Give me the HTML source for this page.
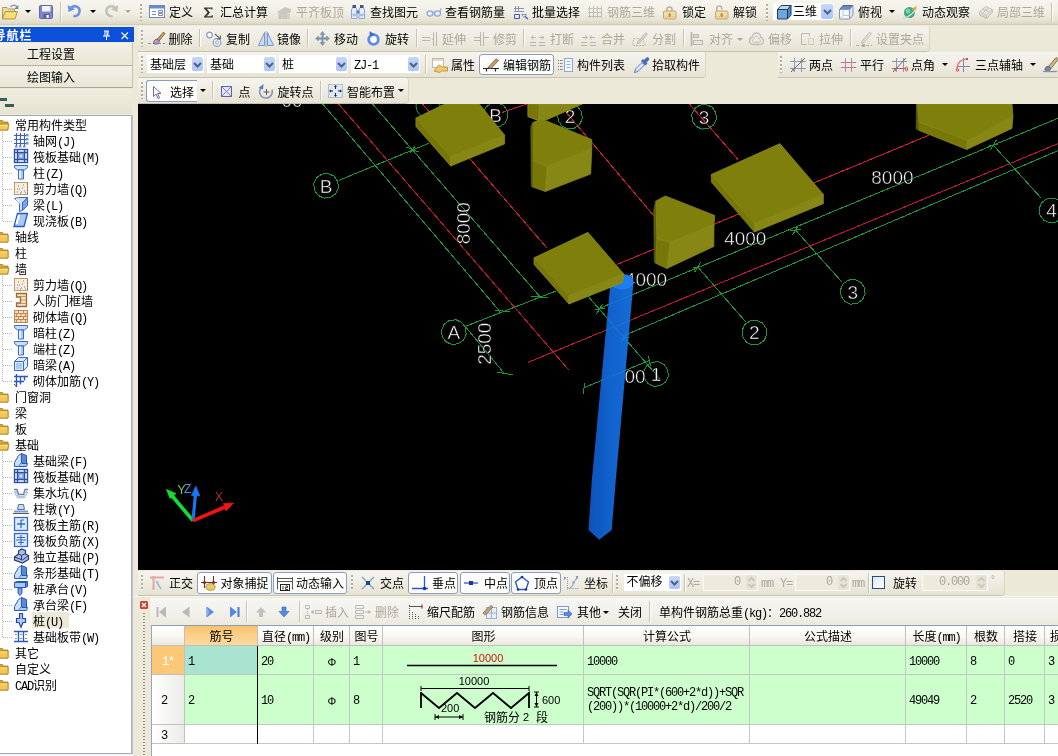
<!DOCTYPE html><html lang="zh"><head><meta charset="utf-8"><title>GGJ</title><style>

html,body{margin:0;padding:0}
body{will-change:transform;width:1058px;height:756px;overflow:hidden;position:relative;background:#ece9d8;font-family:"Liberation Sans","Noto Sans CJK SC",sans-serif;font-size:12px;color:#000;line-height:12px}
.a{position:absolute}
.t{position:absolute;white-space:nowrap;height:14px;line-height:14px;font-size:12px}
.d{color:#aca899}
.ic{position:absolute;width:16px;height:16px;overflow:visible}
.tb{position:absolute;background:linear-gradient(#f5f4ed 0%,#efede2 45%,#e6e3d4 100%);border-bottom:1px solid #c6c3b0;box-shadow:1px 0 0 #d8d5c4}
.grip{position:absolute;width:2px;background-image:repeating-linear-gradient(#b0ad9a 0,#b0ad9a 2px,#fbfaf6 2px,#fbfaf6 3px,transparent 3px,transparent 4px)}
.sep{position:absolute;width:1px;background:#c5c2b2;box-shadow:1px 0 0 #fff}
.btn{position:absolute;border:1px solid #8b9cc0;border-radius:3px;background:#fdfdfb;box-sizing:border-box}
.arr{position:absolute;width:0;height:0;border-left:3px solid transparent;border-right:3px solid transparent;border-top:3px solid #000}
.arr.d{border-top-color:#aca899}
.combo{position:absolute;background:#fff;box-sizing:border-box}
.cbtn{position:absolute;width:13px;background:linear-gradient(#c6d7fb,#adc4f5);border-radius:2px;box-sizing:border-box}
.mono{font-family:"Liberation Mono",monospace;font-size:12px;letter-spacing:-1.2px}

</style></head><body>
<div class="tb" style="left:0px;top:0px;width:1058px;height:24px;background:linear-gradient(#f6f5ee 0%,#f1efe5 50%,#e6e3d4 85%,#dad7c5 100%);border-bottom:1px solid #cfccba"></div>
<div class="sep" style="left:1051px;top:3px;height:19px"></div>
<svg class="ic" style="left:2px;top:4px;" viewBox="0 0 16 16"><path d="M0.500 3.500h4.500l1.500 1.500h6v9.500h-12z" fill="#ecdca8" stroke="#a89060" stroke-width=".9"/><path d="M3 7.500h12.500l-2.500 7.500h-12.500z" fill="#f6d560" stroke="#b09040" stroke-width=".9"/><path d="M4.500 9h9.500l-1.500 4.500h-9.500z" fill="#f9e080"/><path d="M8.500 3c1.500-2.300 5-2.300 6.500 0" fill="none" stroke="#8aa0c0" stroke-width="1.400"/><path d="M16.300 1v4h-4z" fill="#6c84a8"/></svg>
<div class="arr " style="left:24.5px;top:10px"></div>
<svg class="ic" style="left:38px;top:4px;" viewBox="0 0 16 16"><rect x="1.500" y="1.500" width="13" height="13" rx="1" fill="#7c86c4" stroke="#6068a8"/><rect x="4" y="2" width="8.500" height="5.500" fill="#f4f6ff"/><rect x="5.500" y="10" width="6" height="4.500" fill="#5860a0"/><rect x="8.500" y="11" width="2.200" height="3" fill="#fff"/></svg>
<div class="sep" style="left:60px;top:2px;height:20px"></div>
<svg class="ic" style="left:67px;top:4px;" viewBox="0 0 16 16"><g transform="translate(0,-2)"><path d="M3.500 6.500c3-4 9.500-2.500 9 3c-0.300 3-2.500 4.500-5 4.800" fill="none" stroke="#6a92e0" stroke-width="2.600" stroke-linecap="round"/><path d="M0.800 3l0.700 7l6.500-2.800z" fill="#6a92e0"/></g></svg>
<div class="arr " style="left:89.5px;top:10px"></div>
<svg class="ic" style="left:103px;top:4px;opacity:.45;filter:grayscale(1);" viewBox="0 0 16 16"><g transform="translate(0,-2)"><path d="M12.500 6.500c-3-4-9.500-2.500-9 3c0.300 3 2.500 4.500 5 4.800" fill="none" stroke="#8c8c84" stroke-width="2.600" stroke-linecap="round"/><path d="M15.200 3l-0.700 7l-6.500-2.800z" fill="#8c8c84"/></g></svg>
<div class="arr d" style="left:125px;top:10px"></div>
<div class="grip" style="left:140px;top:4px;height:17px"></div>
<svg class="ic" style="left:149px;top:4px;" viewBox="0 0 16 16"><g transform="translate(0,-1)"><rect x="0.500" y="2.500" width="15" height="12" fill="#fff" stroke="#7088c0"/><rect x="1" y="3" width="14" height="2.500" fill="#6888d0"/><path d="M3 8.500h4M3 11.500h4M9.500 7.500h4v2h-4zM9.500 10.500h4v2h-4z" fill="none" stroke="#7890c0"/></g></svg>
<div class="t " style="left:169px;top:6px;">定义</div>
<svg class="ic" style="left:199.5px;top:4px;" viewBox="0 0 16 16"><path d="M4 3.500h8.500v2h-1l-.5-.8h-4.200l3.200 3.800l-3.200 3.800h4.400l.6-1h1v2.200h-8.800v-1l3.600-4l-3.600-4z" fill="#383838"/></svg>
<div class="t " style="left:220px;top:6px;">汇总计算</div>
<svg class="ic" style="left:276px;top:4px;opacity:.45;filter:grayscale(1);" viewBox="0 0 16 16"><path d="M1 8l8-5l6 2v3l-8 4.500z" fill="#9a9a92"/><path d="M2 10h12v5h-12z" fill="#b8b8b0"/><path d="M4 10v5M7 10v5M10 10v5" stroke="#888" /></svg>
<div class="t d" style="left:296px;top:6px;">平齐板顶</div>
<svg class="ic" style="left:350px;top:4px;" viewBox="0 0 16 16"><path d="M1.500 6l1-2.500h3.500l1 2.500v8.500h-5.500zM9 6l1-2.500h3.500l1 2.500v8.500h-5.500z" fill="#e4eefc" stroke="#88a4d8"/><path d="M2.500 1h3.500v3h-3.500zM10 1h3.500v3h-3.500z" fill="#44547c"/><rect x="6.500" y="6.500" width="3" height="3" fill="#6480b8"/><path d="M2.500 11h3.500M10 11h3.500" stroke="#a4bce8" stroke-width="2.500"/></svg>
<div class="t " style="left:370px;top:6px;">查找图元</div>
<svg class="ic" style="left:425.5px;top:4px;" viewBox="0 0 16 16"><ellipse cx="4" cy="9.500" rx="3" ry="2.600" fill="#e8f0fc" stroke="#8fa8d8" stroke-width="1.300"/><ellipse cx="11.500" cy="9.500" rx="3" ry="2.600" fill="#e8f0fc" stroke="#8fa8d8" stroke-width="1.300"/><path d="M7 9c.5-1 1-1 1.500 0M14 8l1-3.500" fill="none" stroke="#8fa8d8" stroke-width="1.200"/></svg>
<div class="t " style="left:445px;top:6px;">查看钢筋量</div>
<svg class="ic" style="left:513px;top:4px;" viewBox="0 0 16 16"><path d="M2.500 2v6M5.500 2v6M1 4.500h10M1 7.500h10" stroke="#8894b8" fill="none"/><path d="M1.500 10.500h5v4h-5z" fill="none" stroke="#4058c8"/><path d="M8.500 10.500h5l-2.500 3z" fill="none" stroke="#8894b8"/><path d="M12 12.500l3 2.500" stroke="#4058c8" stroke-width="1.400"/></svg>
<div class="t " style="left:532px;top:6px;">批量选择</div>
<svg class="ic" style="left:587px;top:4px;opacity:.45;filter:grayscale(1);" viewBox="0 0 16 16"><path d="M2.500 2v12M6.500 2v12M10.500 2v12M14.500 2v12M1 4.500h14M1 8.500h14M1 12.500h14" stroke="#8a8a82" fill="none"/></svg>
<div class="t d" style="left:607px;top:6px;">钢筋三维</div>
<svg class="ic" style="left:662px;top:4px;" viewBox="0 0 16 16"><path d="M5 7.500v-2c0-3.500 5-3.500 5 0v2" fill="none" stroke="#b4ac98" stroke-width="1.400"/><rect x="1.500" y="7" width="12.500" height="8" rx="1.200" fill="#f0dca8" stroke="#c4a670"/><path d="M2.500 12h10.500v2h-10.500z" fill="#e6cc90"/><path d="M7.700 9v4M6.200 11h3" stroke="#a88838" stroke-width="1.100"/></svg>
<div class="t " style="left:682px;top:6px;">锁定</div>
<svg class="ic" style="left:714px;top:4px;" viewBox="0 0 16 16"><path d="M2.800 7.500v-3c0-3.500 5-3.500 5 0v1" fill="none" stroke="#b4ac98" stroke-width="1.400"/><rect x="1.500" y="7" width="12.500" height="8" rx="1.200" fill="#f0dca8" stroke="#c4a670"/><path d="M2.500 12h10.500v2h-10.500z" fill="#e6cc90"/><path d="M7.700 9v4M6.200 11h3" stroke="#a88838" stroke-width="1.100"/></svg>
<div class="t " style="left:733px;top:6px;">解锁</div>
<div class="grip" style="left:766px;top:4px;height:17px"></div>
<div class="a" style="left:773px;top:3px;width:60px;height:17px;background:#fff"></div>
<svg class="ic" style="left:775.5px;top:3.5px;" viewBox="0 0 16 16"><path d="M1.500 5.500l3.500-4h10l-3.500 4z" fill="#bcd8f0" stroke="#283858"/><path d="M1.500 5.500h10v9.500h-10z" fill="#6aa8dc" stroke="#283858"/><path d="M11.500 5.500l3.500-4v9.500l-3.500 4z" fill="#4888c8" stroke="#283858"/></svg>
<div class="t " style="left:793px;top:4.5px;">三维</div>
<div class="cbtn" style="left:821px;top:4px;width:12px;height:15px;width:12px"></div>
<svg class="a" style="left:822.5px;top:8px" width="9" height="8" viewBox="0 0 9 8"><path d="M1 2 L4.5 5.5 L8 2" fill="none" stroke="#4d6185" stroke-width="2"/></svg>
<svg class="ic" style="left:838px;top:4px;" viewBox="0 0 16 16"><path d="M1.500 5.500l3.500-4h10l-3.500 4z" fill="#6888c0" stroke="#506088"/><path d="M1.500 5.500h10v9.500h-10z" fill="#f4f8ff" stroke="#8098c0"/><path d="M11.500 5.500l3.500-4v9.500l-3.500 4z" fill="#dce8f8" stroke="#8098c0"/><path d="M5 5.500v6h6.500M5 11.500l-3.500 3.500" stroke="#b8c8e0" fill="none"/></svg>
<div class="t " style="left:858px;top:6px;">俯视</div>
<div class="arr " style="left:889px;top:10px"></div>
<svg class="ic" style="left:902px;top:4px;" viewBox="0 0 16 16"><circle cx="7.500" cy="8.500" r="5.500" fill="#38a878"/><circle cx="6" cy="7" r="2.500" fill="#78d0a8"/><path d="M1 13.500c2.500 2 12-5 13.500-10" fill="none" stroke="#c8d8f0" stroke-width="1.500"/><path d="M11 4.500l4-3.500l-1 4.500z" fill="#e8c040"/><path d="M10.500 6l2.500-2" stroke="#d8a830" stroke-width="2.400"/></svg>
<div class="t " style="left:922px;top:6px;">动态观察</div>
<svg class="ic" style="left:978px;top:4px;opacity:.45;filter:grayscale(1);" viewBox="0 0 16 16"><path d="M1.500 8l6-5.500l7 3l-6 6z" fill="#d8d8d0" stroke="#8a8a82"/><path d="M1.500 8v3l7 3.500v-3M8.500 14.500l6-6v-3" fill="#c0c0b8" stroke="#8a8a82"/><path d="M5 5l6.500 3M4.500 9.500l5-5" stroke="#8a8a82" fill="none"/></svg>
<div class="t d" style="left:997px;top:6px;">局部三维</div>
<div class="a" style="left:0px;top:27px;width:134px;height:15px;background:#0a50d8"></div>
<div class="t " style="left:-6.5px;top:28.5px;color:#fff;font-size:12px;font-weight:bold;letter-spacing:1px">导航栏</div>
<svg class="a" style="left:101px;top:29px" width="30" height="12" viewBox="0 0 30 12"><path d="M3 2h5M4 2v5M7 2v5M6 2v5M2 7h7M5.5 7v4" stroke="#fff" stroke-width="1" fill="none"/><path d="M20.500 3.500l6.500 6.500M27 3.500l-6.500 6.500" stroke="#fff" stroke-width="1.1"/></svg>
<div class="a" style="left:0px;top:43px;width:132px;height:22px;background:linear-gradient(#f3f1e7,#e9e6d6);border-bottom:1px solid #b5b19c;border-right:1px solid #c8c4b0"></div>
<div class="t " style="left:27px;top:48px;">工程设置</div>
<div class="a" style="left:0px;top:66px;width:132px;height:21px;background:linear-gradient(#f3f1e7,#e9e6d6);border-bottom:1px solid #a9a692;border-right:1px solid #c8c4b0"></div>
<div class="t " style="left:27px;top:71px;">绘图输入</div>
<div class="a" style="left:0px;top:89px;width:132px;height:25px;background:linear-gradient(#efede0,#e6e3d2)"></div>
<div class="a" style="left:0px;top:98px;width:7px;height:3px;background:#35605a"></div>
<div class="a" style="left:5px;top:104px;width:9px;height:3px;background:#35605a"></div>
<div class="a" style="left:0px;top:115px;width:131px;height:637px;background:#fff;border-top:1px solid #a5a8b8;border-bottom:1px solid #a6a8c0"></div>
<div class="a" style="left:0px;top:754px;width:133px;height:2px;background:#f4f6fa"></div>
<div class="a" style="left:131px;top:115px;width:2px;height:639px;background:linear-gradient(90deg,#a6a8c0,#c6c8d8)"></div>
<div class="a" style="left:2px;top:132px;width:1px;height:89px;background-image:repeating-linear-gradient(#b8b8b8 0,#b8b8b8 1px,transparent 1px,transparent 2px)"></div>
<div class="a" style="left:2px;top:276px;width:1px;height:105px;background-image:repeating-linear-gradient(#b8b8b8 0,#b8b8b8 1px,transparent 1px,transparent 2px)"></div>
<div class="a" style="left:2px;top:452px;width:1px;height:185px;background-image:repeating-linear-gradient(#b8b8b8 0,#b8b8b8 1px,transparent 1px,transparent 2px)"></div>
<svg class="ic" style="left:-8px;top:116px;" viewBox="0 0 16 16"><path d="M6.500 4.500h4l1 1.500h4.500v8h-9.500z" fill="#dca830" stroke="#a07820" stroke-width=".8"/><path d="M6 14l1.500-6h9.500l-1.500 6z" fill="#f6cc58" stroke="#a88028" stroke-width=".8"/><path d="M8 9.500h7.500" stroke="#fbe49a"/></svg>
<div class="t " style="left:15px;top:119px;">常用构件类型</div>
<div class="a" style="left:3px;top:141px;width:10px;height:1px;background-image:repeating-linear-gradient(90deg,#b8b8b8 0,#b8b8b8 1px,transparent 1px,transparent 2px)"></div>
<svg class="ic" style="left:13px;top:132px;" viewBox="0 0 16 16"><path d="M3.500 1v13M7.500 1v13M11.500 1v13M1 3.500h13M1 7.500h13M1 11.500h13" stroke="#4060b0" stroke-width="1.200"/><path d="M13 2h2.500v2.500h-2.500zM13 6h2.500v2.500h-2.500zM13 10h2.500v2.500h-2.500zM2 13.500h2.500v2h-2.500zM6 13.500h2.500v2h-2.500zM10 13.500h2.500v2h-2.500z" fill="#7090d8"/></svg>
<div class="t " style="left:33px;top:135px;">轴网<span class="mono">(J)</span></div>
<div class="a" style="left:3px;top:157px;width:10px;height:1px;background-image:repeating-linear-gradient(90deg,#b8b8b8 0,#b8b8b8 1px,transparent 1px,transparent 2px)"></div>
<svg class="ic" style="left:13px;top:148px;" viewBox="0 0 16 16"><rect x="1.500" y="1.500" width="13" height="13" fill="#fff" stroke="#2850a8" stroke-width="1.400"/><path d="M1.500 4.500h13M1.500 11.500h13M4.500 1.500v13M11.500 1.500v13" stroke="#2850a8" stroke-width="1.400"/><rect x="5.800" y="5.800" width="4.400" height="4.400" fill="#c8dcf8" stroke="#5078c8"/></svg>
<div class="t " style="left:33px;top:151px;">筏板基础<span class="mono">(M)</span></div>
<div class="a" style="left:3px;top:173px;width:10px;height:1px;background-image:repeating-linear-gradient(90deg,#b8b8b8 0,#b8b8b8 1px,transparent 1px,transparent 2px)"></div>
<svg class="ic" style="left:13px;top:164px;" viewBox="0 0 16 16"><path d="M1.500 1.500h13v2l-3 2.500h-7l-3-2.500z" fill="#c8e0fc" stroke="#3868c8"/><path d="M5.500 6h5v9h-5z" fill="#a8c8f8" stroke="#3868c8"/><path d="M7 6.500v8" stroke="#fff" stroke-width="1.500"/></svg>
<div class="t " style="left:33px;top:167px;">柱<span class="mono">(Z)</span></div>
<div class="a" style="left:3px;top:189px;width:10px;height:1px;background-image:repeating-linear-gradient(90deg,#b8b8b8 0,#b8b8b8 1px,transparent 1px,transparent 2px)"></div>
<svg class="ic" style="left:13px;top:180px;" viewBox="0 0 16 16"><rect x="1.500" y="2.500" width="13" height="12" fill="#f8ecd8" stroke="#c89868"/><path d="M4 12h1M6 9h1M8 12h1M5 6h1M9 8h1M11 11h1M7 13h1M10 5h1M12 13h1M4 9h1" stroke="#6080c0"/><path d="M14.500 3v11" stroke="#a87848" stroke-dasharray="2 1"/></svg>
<div class="t " style="left:33px;top:183px;">剪力墙<span class="mono">(Q)</span></div>
<div class="a" style="left:3px;top:205px;width:10px;height:1px;background-image:repeating-linear-gradient(90deg,#b8b8b8 0,#b8b8b8 1px,transparent 1px,transparent 2px)"></div>
<svg class="ic" style="left:13px;top:196px;" viewBox="0 0 16 16"><path d="M1.500 2.500l4-1h9l-3 4l-2 1v8l-3 1v-8z" fill="#c8e0fc" stroke="#3868c8"/><path d="M9.500 14.500v-8l5-5v8z" fill="#7aa0e8" stroke="#3868c8"/><path d="M3 3l4 4" stroke="#fff" stroke-width="1.500"/></svg>
<div class="t " style="left:33px;top:199px;">梁<span class="mono">(L)</span></div>
<div class="a" style="left:3px;top:221px;width:10px;height:1px;background-image:repeating-linear-gradient(90deg,#b8b8b8 0,#b8b8b8 1px,transparent 1px,transparent 2px)"></div>
<svg class="ic" style="left:13px;top:212px;" viewBox="0 0 16 16"><path d="M4.500 1.500h10l-3.500 13h-10z" fill="#a8c8f8" stroke="#2858c0" stroke-width="1.300"/><path d="M6 3l-2.500 9" stroke="#fff" stroke-width="2"/></svg>
<div class="t " style="left:33px;top:215px;">现浇板<span class="mono">(B)</span></div>
<svg class="ic" style="left:-8px;top:228px;" viewBox="0 0 16 16"><path d="M6.500 4.500h4l1 1.500h4.500v8h-9.500z" fill="#dca830" stroke="#a07820" stroke-width=".8"/><path d="M6.500 7h9.500v7h-9.500z" fill="#f4c850" stroke="#a88028" stroke-width=".8"/><path d="M7.500 8h7.500" stroke="#fbe49a"/></svg>
<div class="t " style="left:15px;top:231px;">轴线</div>
<svg class="ic" style="left:-8px;top:244px;" viewBox="0 0 16 16"><path d="M6.500 4.500h4l1 1.500h4.500v8h-9.500z" fill="#dca830" stroke="#a07820" stroke-width=".8"/><path d="M6.500 7h9.500v7h-9.500z" fill="#f4c850" stroke="#a88028" stroke-width=".8"/><path d="M7.500 8h7.500" stroke="#fbe49a"/></svg>
<div class="t " style="left:15px;top:247px;">柱</div>
<svg class="ic" style="left:-8px;top:260px;" viewBox="0 0 16 16"><path d="M6.500 4.500h4l1 1.500h4.500v8h-9.500z" fill="#dca830" stroke="#a07820" stroke-width=".8"/><path d="M6 14l1.500-6h9.500l-1.500 6z" fill="#f6cc58" stroke="#a88028" stroke-width=".8"/><path d="M8 9.500h7.500" stroke="#fbe49a"/></svg>
<div class="t " style="left:15px;top:263px;">墙</div>
<div class="a" style="left:3px;top:285px;width:10px;height:1px;background-image:repeating-linear-gradient(90deg,#b8b8b8 0,#b8b8b8 1px,transparent 1px,transparent 2px)"></div>
<svg class="ic" style="left:13px;top:276px;" viewBox="0 0 16 16"><rect x="1.500" y="2.500" width="13" height="12" fill="#f8ecd8" stroke="#c89868"/><path d="M4 12h1M6 9h1M8 12h1M5 6h1M9 8h1M11 11h1M7 13h1M10 5h1M12 13h1M4 9h1" stroke="#6080c0"/><path d="M14.500 3v11" stroke="#a87848" stroke-dasharray="2 1"/></svg>
<div class="t " style="left:33px;top:279px;">剪力墙<span class="mono">(Q)</span></div>
<div class="a" style="left:3px;top:301px;width:10px;height:1px;background-image:repeating-linear-gradient(90deg,#b8b8b8 0,#b8b8b8 1px,transparent 1px,transparent 2px)"></div>
<svg class="ic" style="left:13px;top:292px;" viewBox="0 0 16 16"><path d="M3.500 1.500h10v13h-10v-3.500h4v-6h-4z" fill="#f8e0c0" stroke="#a06830" stroke-width="1.300"/><path d="M8 4.500h5M8 8h5M8 11.500h5" stroke="#c89868"/></svg>
<div class="t " style="left:33px;top:295px;">人防门框墙</div>
<div class="a" style="left:3px;top:317px;width:10px;height:1px;background-image:repeating-linear-gradient(90deg,#b8b8b8 0,#b8b8b8 1px,transparent 1px,transparent 2px)"></div>
<svg class="ic" style="left:13px;top:308px;" viewBox="0 0 16 16"><rect x="1.500" y="2.500" width="13" height="12" fill="#f8e0c0" stroke="#c08850"/><path d="M1.500 5.500h13M1.500 8.500h13M1.500 11.500h13M5.500 2.500v3M10.500 2.500v3M3.500 5.500v3M8 5.500v3M12.500 5.500v3M5.500 8.500v3M10.500 8.500v3M3.500 11.500v3M8 11.500v3M12.500 11.500v3" stroke="#c08850"/></svg>
<div class="t " style="left:33px;top:311px;">砌体墙<span class="mono">(Q)</span></div>
<div class="a" style="left:3px;top:333px;width:10px;height:1px;background-image:repeating-linear-gradient(90deg,#b8b8b8 0,#b8b8b8 1px,transparent 1px,transparent 2px)"></div>
<svg class="ic" style="left:13px;top:324px;" viewBox="0 0 16 16"><path d="M1.500 1.500h13v2l-3 2.500h-7l-3-2.500z" fill="#c8e0fc" stroke="#3868c8"/><path d="M5.500 6h5v9h-5z" fill="#a8c8f8" stroke="#3868c8"/><path d="M7 6.500v8" stroke="#fff" stroke-width="1.500"/></svg>
<div class="t " style="left:33px;top:327px;">暗柱<span class="mono">(Z)</span></div>
<div class="a" style="left:3px;top:349px;width:10px;height:1px;background-image:repeating-linear-gradient(90deg,#b8b8b8 0,#b8b8b8 1px,transparent 1px,transparent 2px)"></div>
<svg class="ic" style="left:13px;top:340px;" viewBox="0 0 16 16"><path d="M1.500 1.500h13v2l-3 2.500h-7l-3-2.500z" fill="#c8e0fc" stroke="#3868c8"/><path d="M5.500 6h5v9h-5z" fill="#a8c8f8" stroke="#3868c8"/><path d="M7 6.500v8" stroke="#fff" stroke-width="1.500"/></svg>
<div class="t " style="left:33px;top:343px;">端柱<span class="mono">(Z)</span></div>
<div class="a" style="left:3px;top:365px;width:10px;height:1px;background-image:repeating-linear-gradient(90deg,#b8b8b8 0,#b8b8b8 1px,transparent 1px,transparent 2px)"></div>
<svg class="ic" style="left:13px;top:356px;" viewBox="0 0 16 16"><path d="M1.500 5.500l4-4h9v9l-4 4h-9z" fill="#dcecfc" stroke="#3868c8"/><path d="M1.500 5.500h9v9M10.500 5.500l4-4" fill="none" stroke="#3868c8"/><path d="M3 7h6v6h-6z" fill="#a8c8f8"/></svg>
<div class="t " style="left:33px;top:359px;">暗梁<span class="mono">(A)</span></div>
<div class="a" style="left:3px;top:381px;width:10px;height:1px;background-image:repeating-linear-gradient(90deg,#b8b8b8 0,#b8b8b8 1px,transparent 1px,transparent 2px)"></div>
<svg class="ic" style="left:13px;top:372px;" viewBox="0 0 16 16"><path d="M1 4.500h14M3.500 2v13M1 9.500h10M7.500 4.500v8M11.500 4.500v4" stroke="#2858b8" stroke-width="1.400" fill="none"/><path d="M1 12l3 3" stroke="#2858b8"/></svg>
<div class="t " style="left:33px;top:375px;">砌体加筋<span class="mono">(Y)</span></div>
<svg class="ic" style="left:-8px;top:388px;" viewBox="0 0 16 16"><path d="M6.500 4.500h4l1 1.500h4.500v8h-9.500z" fill="#dca830" stroke="#a07820" stroke-width=".8"/><path d="M6.500 7h9.500v7h-9.500z" fill="#f4c850" stroke="#a88028" stroke-width=".8"/><path d="M7.500 8h7.500" stroke="#fbe49a"/></svg>
<div class="t " style="left:15px;top:391px;">门窗洞</div>
<svg class="ic" style="left:-8px;top:404px;" viewBox="0 0 16 16"><path d="M6.500 4.500h4l1 1.500h4.500v8h-9.500z" fill="#dca830" stroke="#a07820" stroke-width=".8"/><path d="M6.500 7h9.500v7h-9.500z" fill="#f4c850" stroke="#a88028" stroke-width=".8"/><path d="M7.500 8h7.500" stroke="#fbe49a"/></svg>
<div class="t " style="left:15px;top:407px;">梁</div>
<svg class="ic" style="left:-8px;top:420px;" viewBox="0 0 16 16"><path d="M6.500 4.500h4l1 1.500h4.500v8h-9.500z" fill="#dca830" stroke="#a07820" stroke-width=".8"/><path d="M6.500 7h9.500v7h-9.500z" fill="#f4c850" stroke="#a88028" stroke-width=".8"/><path d="M7.500 8h7.500" stroke="#fbe49a"/></svg>
<div class="t " style="left:15px;top:423px;">板</div>
<svg class="ic" style="left:-8px;top:436px;" viewBox="0 0 16 16"><path d="M6.500 4.500h4l1 1.500h4.500v8h-9.500z" fill="#dca830" stroke="#a07820" stroke-width=".8"/><path d="M6 14l1.500-6h9.500l-1.500 6z" fill="#f6cc58" stroke="#a88028" stroke-width=".8"/><path d="M8 9.500h7.500" stroke="#fbe49a"/></svg>
<div class="t " style="left:15px;top:439px;">基础</div>
<div class="a" style="left:3px;top:461px;width:10px;height:1px;background-image:repeating-linear-gradient(90deg,#b8b8b8 0,#b8b8b8 1px,transparent 1px,transparent 2px)"></div>
<svg class="ic" style="left:13px;top:452px;" viewBox="0 0 16 16"><path d="M1.500 14.500v-4l4-7l3-2v9l-3 4z" fill="#c8e0fc" stroke="#2858b8"/><path d="M8.500 10.500v-9l5 2v9z" fill="#5888e0" stroke="#2858b8"/><path d="M5.500 14.500h8l1-3h-6" fill="#a8c8f8" stroke="#2858b8"/></svg>
<div class="t " style="left:33px;top:455px;">基础梁<span class="mono">(F)</span></div>
<div class="a" style="left:3px;top:477px;width:10px;height:1px;background-image:repeating-linear-gradient(90deg,#b8b8b8 0,#b8b8b8 1px,transparent 1px,transparent 2px)"></div>
<svg class="ic" style="left:13px;top:468px;" viewBox="0 0 16 16"><rect x="1.500" y="1.500" width="13" height="13" fill="#fff" stroke="#2850a8" stroke-width="1.400"/><path d="M1.500 4.500h13M1.500 11.500h13M4.500 1.500v13M11.500 1.500v13" stroke="#2850a8" stroke-width="1.400"/><rect x="5.800" y="5.800" width="4.400" height="4.400" fill="#c8dcf8" stroke="#5078c8"/></svg>
<div class="t " style="left:33px;top:471px;">筏板基础<span class="mono">(M)</span></div>
<div class="a" style="left:3px;top:493px;width:10px;height:1px;background-image:repeating-linear-gradient(90deg,#b8b8b8 0,#b8b8b8 1px,transparent 1px,transparent 2px)"></div>
<svg class="ic" style="left:13px;top:484px;" viewBox="0 0 16 16"><path d="M1 5.500h3l1.500 5h5l1.500-5h3" fill="none" stroke="#6080b8" stroke-width="1.300"/><path d="M1 8l3.500 6h7l3.500-6l-2.500-.5l-2 5h-5l-2-5z" fill="#d0dcf0" stroke="#8098c8" stroke-dasharray="1 1"/></svg>
<div class="t " style="left:33px;top:487px;">集水坑<span class="mono">(K)</span></div>
<div class="a" style="left:3px;top:509px;width:10px;height:1px;background-image:repeating-linear-gradient(90deg,#b8b8b8 0,#b8b8b8 1px,transparent 1px,transparent 2px)"></div>
<svg class="ic" style="left:13px;top:500px;" viewBox="0 0 16 16"><path d="M5.500 4.500h5l1 5h-7z" fill="#c8dcf8" stroke="#5070b0"/><path d="M1 10.500h14v2h-14z" fill="#8098c8"/><path d="M0 13.500h16" stroke="#555"/></svg>
<div class="t " style="left:33px;top:503px;">柱墩<span class="mono">(Y)</span></div>
<div class="a" style="left:3px;top:525px;width:10px;height:1px;background-image:repeating-linear-gradient(90deg,#b8b8b8 0,#b8b8b8 1px,transparent 1px,transparent 2px)"></div>
<svg class="ic" style="left:13px;top:516px;" viewBox="0 0 16 16"><rect x="1.500" y="1.500" width="13" height="13" fill="#dcecfc" stroke="#3868c8" stroke-width="1.300"/><path d="M8 4v8M4 8h8" stroke="#3868c8" stroke-width="1.300"/><path d="M8 4h3" stroke="#3868c8"/></svg>
<div class="t " style="left:33px;top:519px;">筏板主筋<span class="mono">(R)</span></div>
<div class="a" style="left:3px;top:541px;width:10px;height:1px;background-image:repeating-linear-gradient(90deg,#b8b8b8 0,#b8b8b8 1px,transparent 1px,transparent 2px)"></div>
<svg class="ic" style="left:13px;top:532px;" viewBox="0 0 16 16"><rect x="1.500" y="1.500" width="13" height="13" fill="#dcecfc" stroke="#3868c8" stroke-width="1.300"/><path d="M8 3v10M3 8h10M4 5.500h8M5 10.500h6" stroke="#3868c8" stroke-width="1.100"/></svg>
<div class="t " style="left:33px;top:535px;">筏板负筋<span class="mono">(X)</span></div>
<div class="a" style="left:3px;top:557px;width:10px;height:1px;background-image:repeating-linear-gradient(90deg,#b8b8b8 0,#b8b8b8 1px,transparent 1px,transparent 2px)"></div>
<svg class="ic" style="left:13px;top:548px;" viewBox="0 0 16 16"><path d="M1.500 9l4-3v-3l3-2l4 1.500v3.500l3 1.500v4l-6 3.500l-8-3z" fill="#a8c0e8" stroke="#283870" stroke-width="1.200"/><path d="M5.500 6l3 1.500l4-2M8.500 7.500v4M1.500 9l8 3l6-4.500" fill="none" stroke="#283870"/></svg>
<div class="t " style="left:33px;top:551px;">独立基础<span class="mono">(P)</span></div>
<div class="a" style="left:3px;top:573px;width:10px;height:1px;background-image:repeating-linear-gradient(90deg,#b8b8b8 0,#b8b8b8 1px,transparent 1px,transparent 2px)"></div>
<svg class="ic" style="left:13px;top:564px;" viewBox="0 0 16 16"><path d="M1.500 14.500v-4l4-7l3-2v9l-3 4z" fill="#c8e0fc" stroke="#2858b8"/><path d="M8.500 10.500v-9l5 2v9z" fill="#5888e0" stroke="#2858b8"/><path d="M5.500 14.500h8l1-3h-6" fill="#a8c8f8" stroke="#2858b8"/></svg>
<div class="t " style="left:33px;top:567px;">条形基础<span class="mono">(T)</span></div>
<div class="a" style="left:3px;top:589px;width:10px;height:1px;background-image:repeating-linear-gradient(90deg,#b8b8b8 0,#b8b8b8 1px,transparent 1px,transparent 2px)"></div>
<svg class="ic" style="left:13px;top:580px;" viewBox="0 0 16 16"><path d="M1.500 2.500l2-1h11l-2 1z" fill="#dcecfc" stroke="#2858b8"/><path d="M1.500 2.500h11v5h-11z" fill="#a8c8f8" stroke="#2858b8"/><path d="M12.500 2.500l2-1v5l-2 1z" fill="#5888e0" stroke="#2858b8"/><path d="M5 8h4v5l-2 2.500l-2-2.500z" fill="#7aa0e8" stroke="#2858b8"/></svg>
<div class="t " style="left:33px;top:583px;">桩承台<span class="mono">(V)</span></div>
<div class="a" style="left:3px;top:605px;width:10px;height:1px;background-image:repeating-linear-gradient(90deg,#b8b8b8 0,#b8b8b8 1px,transparent 1px,transparent 2px)"></div>
<svg class="ic" style="left:13px;top:596px;" viewBox="0 0 16 16"><path d="M1.500 14.500v-4l4-7l3-2v9l-3 4z" fill="#c8e0fc" stroke="#2858b8"/><path d="M8.500 10.500v-9l5 2v9z" fill="#5888e0" stroke="#2858b8"/><path d="M5.500 14.500h8l1-3h-6" fill="#a8c8f8" stroke="#2858b8"/></svg>
<div class="t " style="left:33px;top:599px;">承台梁<span class="mono">(F)</span></div>
<div class="a" style="left:3px;top:621px;width:10px;height:1px;background-image:repeating-linear-gradient(90deg,#b8b8b8 0,#b8b8b8 1px,transparent 1px,transparent 2px)"></div>
<div class="a" style="left:32px;top:612px;width:37px;height:16px;background:#ece9d8"></div>
<svg class="ic" style="left:13px;top:612px;" viewBox="0 0 16 16"><path d="M6.500 1.500h3v5h3v4h-2.500l-2 5l-2-5h-2.500v-4h3z" fill="#a8c8f8" stroke="#2848a0" stroke-width="1.200"/></svg>
<div class="t " style="left:33px;top:615px;">桩<span class="mono">(U)</span></div>
<div class="a" style="left:3px;top:637px;width:10px;height:1px;background-image:repeating-linear-gradient(90deg,#b8b8b8 0,#b8b8b8 1px,transparent 1px,transparent 2px)"></div>
<svg class="ic" style="left:13px;top:628px;" viewBox="0 0 16 16"><path d="M1 3.500h14M1 13.500h14" stroke="#2858b8" stroke-width="1.600"/><path d="M5.500 3.500v10M10.500 3.500v10" stroke="#2858b8" stroke-width="1.300"/><path d="M2 6.500h2M7 6.500h2M12 6.500h2M2 10.500h2M7 10.500h2M12 10.500h2" stroke="#7090d0"/></svg>
<div class="t " style="left:33px;top:631px;">基础板带<span class="mono">(W)</span></div>
<svg class="ic" style="left:-8px;top:644px;" viewBox="0 0 16 16"><path d="M6.500 4.500h4l1 1.500h4.500v8h-9.500z" fill="#dca830" stroke="#a07820" stroke-width=".8"/><path d="M6.500 7h9.500v7h-9.500z" fill="#f4c850" stroke="#a88028" stroke-width=".8"/><path d="M7.500 8h7.500" stroke="#fbe49a"/></svg>
<div class="t " style="left:15px;top:647px;">其它</div>
<svg class="ic" style="left:-8px;top:660px;" viewBox="0 0 16 16"><path d="M6.500 4.500h4l1 1.500h4.500v8h-9.500z" fill="#dca830" stroke="#a07820" stroke-width=".8"/><path d="M6.500 7h9.500v7h-9.500z" fill="#f4c850" stroke="#a88028" stroke-width=".8"/><path d="M7.500 8h7.500" stroke="#fbe49a"/></svg>
<div class="t " style="left:15px;top:663px;">自定义</div>
<svg class="ic" style="left:-8px;top:676px;" viewBox="0 0 16 16"><path d="M6.500 4.500h4l1 1.500h4.500v8h-9.500z" fill="#dca830" stroke="#a07820" stroke-width=".8"/><path d="M6.500 7h9.500v7h-9.500z" fill="#f4c850" stroke="#a88028" stroke-width=".8"/><path d="M7.500 8h7.500" stroke="#fbe49a"/></svg>
<div class="t " style="left:15px;top:679px;"><span class="mono">CAD</span>识别</div>
<div class="tb" style="left:138px;top:26px;width:791px;height:25px;border-radius:0 3px 3px 0"></div>
<div class="grip" style="left:141px;top:30px;height:17px"></div>
<svg class="ic" style="left:148px;top:31px;" viewBox="0 0 16 16"><path d="M0 12.500h17" stroke="#8a8f98" stroke-width="1" stroke-dasharray="3 2"/><path d="M9 8.500l6.500-7.500l1.500 1.500l-6 7.500z" fill="#c8a060" stroke="#705830" stroke-width=".8"/><path d="M5.500 12.500c0-3 2-5 4.500-4l1.200 1.200c.8 2-2 4.500-5.700 2.800z" fill="#b898c8" stroke="#584868" stroke-width=".8"/></svg>
<div class="t " style="left:168.5px;top:33px;">删除</div>
<svg class="ic" style="left:206px;top:31px;" viewBox="0 0 16 16"><circle cx="3.500" cy="4" r="2.800" fill="#fff" stroke="#8098c0" stroke-width="1.200"/><circle cx="11" cy="11.500" r="3.800" fill="#fff" stroke="#8098c0" stroke-width="1.200"/><circle cx="11" cy="11.500" r="1.600" fill="none" stroke="#8098c0"/><path d="M9 3l5.500 5M14.500 4.500v3.500h-3.500" fill="none" stroke="#606870" stroke-width="1.100"/></svg>
<div class="t " style="left:226px;top:33px;">复制</div>
<svg class="ic" style="left:258px;top:31px;" viewBox="0 0 16 16"><path d="M6.500 1.500v13h-6z" fill="#c8dcf8" stroke="#7898d0"/><path d="M9.500 1.500v13h6z" fill="#c8dcf8" stroke="#7898d0"/><path d="M8 0v16" stroke="#9098a8" stroke-width=".8"/></svg>
<div class="t " style="left:277px;top:33px;">镜像</div>
<svg class="ic" style="left:315px;top:31px;" viewBox="0 0 16 16"><path d="M7.500 0.500l2.500 3h-1.800v3.300h3.300v-1.800l3 2.500l-3 2.500v-1.800h-3.300v3.300h1.800l-2.500 3l-2.500-3h1.800v-3.300h-3.300v1.800l-3-2.500l3-2.500v1.800h3.300v-3.300h-1.800z" fill="#8098b4" stroke="#5c7490" stroke-width=".4"/></svg>
<div class="t " style="left:334px;top:33px;">移动</div>
<svg class="ic" style="left:366px;top:31px;" viewBox="0 0 16 16"><circle cx="7.500" cy="8.500" r="4.800" fill="#fff" stroke="#5c8ce4" stroke-width="2.800"/><path d="M3.500 0l5 3.500l-5.500 2.500z" fill="#3868d0"/><path d="M0.500 2.500l3-2.500v5.500z" fill="#efede2"/></svg>
<div class="t " style="left:385px;top:33px;">旋转</div>
<svg class="ic" style="left:422px;top:31px;opacity:.45;filter:grayscale(1);" viewBox="0 0 16 16"><path d="M11.500 1v14M14.500 1v14" stroke="#777" fill="none"/><path d="M0 6.500h8M0 9.500h8" stroke="#777"/><path d="M8 8h3" stroke="#777" stroke-dasharray="1 1"/></svg>
<div class="t d" style="left:442px;top:33px;">延伸</div>
<svg class="ic" style="left:473.5px;top:31px;opacity:.45;filter:grayscale(1);" viewBox="0 0 16 16"><path d="M6.500 1v14M9.500 1v14" stroke="#777" fill="none"/><path d="M0 6.500h6M10 6.500h5M0 9.500h6" stroke="#777"/></svg>
<div class="t d" style="left:493px;top:33px;">修剪</div>
<svg class="ic" style="left:530px;top:31px;opacity:.45;filter:grayscale(1);" viewBox="0 0 16 16"><path d="M0 11.500h6M9 11.500h6M0 14.500h6M9 14.500h6" stroke="#777"/><path d="M1 6.500h5M9 6.500h5M3.500 4.500l-2.500 2l2.500 2M11.500 4.500l2.500 2l-2.500 2" stroke="#777" fill="none"/></svg>
<div class="t d" style="left:550px;top:33px;">打断</div>
<svg class="ic" style="left:581px;top:31px;opacity:.45;filter:grayscale(1);" viewBox="0 0 16 16"><path d="M0 11.500h6M9 11.500h6M0 14.500h6M9 14.500h6" stroke="#777"/><path d="M1 6.500h5M9 6.500h5M4 4.500l2.500 2l-2.500 2M11 4.500l-2.500 2l2.500 2" stroke="#777" fill="none"/></svg>
<div class="t d" style="left:601px;top:33px;">合并</div>
<svg class="ic" style="left:632px;top:31px;opacity:.45;filter:grayscale(1);" viewBox="0 0 16 16"><path d="M1.500 7.500h9l3 7h-12.500z" fill="none" stroke="#777" stroke-dasharray="2 1"/><path d="M6 10.500l8-9l1.500 1.500l-8 9l-2.500 1z" fill="#bbb" stroke="#666" stroke-width=".8"/></svg>
<div class="t d" style="left:652px;top:33px;">分割</div>
<svg class="ic" style="left:690px;top:31px;opacity:.45;filter:grayscale(1);" viewBox="0 0 16 16"><path d="M1.500 1v14" stroke="#666" stroke-width="1.600"/><rect x="3.500" y="3.500" width="5" height="3" fill="#bbb" stroke="#777"/><rect x="3.500" y="9.500" width="9" height="4" fill="#ddd" stroke="#777"/></svg>
<div class="t d" style="left:709px;top:33px;">对齐</div>
<svg class="ic" style="left:749px;top:31px;opacity:.45;filter:grayscale(1);" viewBox="0 0 16 16"><path d="M7.500 2c3 0 4 2 4 4c2 .5 3 2 3 4c0 2-1.500 3.500-4 3.500h-6c-2.500 0-4-1.500-4-3.500c0-2 1-3.500 3-4c0-2 1-4 4-4z" fill="none" stroke="#888" stroke-width="1.300"/><path d="M7.500 5c1.500 0 1.800 1.200 1.800 2.500c1.500.3 2.200 1 2.200 2.200c0 1-.8 1.600-2 1.600h-4c-1.200 0-2-.6-2-1.600c0-1.200.7-1.900 2.200-2.200c0-1.300.3-2.500 1.800-2.500z" fill="none" stroke="#888"/></svg>
<div class="t d" style="left:768px;top:33px;">偏移</div>
<svg class="ic" style="left:800px;top:31px;opacity:.45;filter:grayscale(1);" viewBox="0 0 16 16"><path d="M1.500 2.500h8v3M1.500 2.500v11h5" fill="none" stroke="#777"/><path d="M8.500 7.500h5v6h-5z" fill="none" stroke="#777" stroke-dasharray="1 1"/></svg>
<div class="t d" style="left:819px;top:33px;">拉伸</div>
<svg class="ic" style="left:856px;top:31px;opacity:.45;filter:grayscale(1);" viewBox="0 0 16 16"><path d="M6 10l7.500-9l2 1.500l-7.500 9l-2.500 .5z" fill="#ccc" stroke="#777" stroke-width=".8"/><path d="M0 14.500h16" stroke="#666" stroke-dasharray="3 2"/><rect x="6" y="13" width="3" height="3" fill="#666"/></svg>
<div class="t d" style="left:876px;top:33px;">设置夹点</div>
<div class="sep" style="left:199px;top:29px;height:18px"></div>
<div class="sep" style="left:307px;top:29px;height:18px"></div>
<div class="sep" style="left:415.5px;top:29px;height:18px"></div>
<div class="sep" style="left:523px;top:29px;height:18px"></div>
<div class="sep" style="left:683px;top:29px;height:18px"></div>
<div class="sep" style="left:850px;top:29px;height:18px"></div>
<div class="arr d" style="left:736.5px;top:38px"></div>
<div class="tb" style="left:138px;top:52px;width:567px;height:25px;border-radius:0 3px 3px 0"></div>
<div class="grip" style="left:141px;top:56px;height:17px"></div>
<div class="combo" style="left:147px;top:55px;width:57px;height:18px;"></div>
<div class="t " style="left:150px;top:58px;">基础层</div>
<div class="cbtn" style="left:192px;top:57px;width:11px;height:14px;width:11px"></div>
<svg class="a" style="left:193px;top:60.5px" width="9" height="8" viewBox="0 0 9 8"><path d="M1 2 L4.5 5.5 L8 2" fill="none" stroke="#4d6185" stroke-width="2"/></svg>
<div class="combo" style="left:207px;top:55px;width:69px;height:18px;"></div>
<div class="t " style="left:210px;top:58px;">基础</div>
<div class="cbtn" style="left:264px;top:57px;width:11px;height:14px;width:11px"></div>
<svg class="a" style="left:265px;top:60.5px" width="9" height="8" viewBox="0 0 9 8"><path d="M1 2 L4.5 5.5 L8 2" fill="none" stroke="#4d6185" stroke-width="2"/></svg>
<div class="combo" style="left:279px;top:55px;width:69px;height:18px;"></div>
<div class="t " style="left:282px;top:58px;">桩</div>
<div class="cbtn" style="left:336px;top:57px;width:11px;height:14px;width:11px"></div>
<svg class="a" style="left:337px;top:60.5px" width="9" height="8" viewBox="0 0 9 8"><path d="M1 2 L4.5 5.5 L8 2" fill="none" stroke="#4d6185" stroke-width="2"/></svg>
<div class="combo" style="left:351px;top:55px;width:69px;height:18px;"></div>
<div class="t " style="left:354px;top:58px;"><span class="mono">ZJ-1</span></div>
<div class="cbtn" style="left:408px;top:57px;width:11px;height:14px;width:11px"></div>
<svg class="a" style="left:409px;top:60.5px" width="9" height="8" viewBox="0 0 9 8"><path d="M1 2 L4.5 5.5 L8 2" fill="none" stroke="#4d6185" stroke-width="2"/></svg>
<div class="sep" style="left:425px;top:55px;height:18px"></div>
<svg class="ic" style="left:432px;top:57px;" viewBox="0 0 16 16"><rect x="0.500" y="1.500" width="11" height="9" fill="#fff" stroke="#c8b8a8"/><rect x="1" y="2" width="10" height="2" fill="#e8d8c8"/><path d="M2 14l4-5c1-1 2-1 3 0l1.500 1h5v4h-6l-2 1.500z" fill="#f0c868" stroke="#b08838" stroke-width=".8"/></svg>
<div class="t " style="left:451px;top:59px;">属性</div>
<div class="btn" style="left:479px;top:54px;width:75px;height:21px;"></div>
<svg class="ic" style="left:483px;top:57px;" viewBox="0 0 16 16"><path d="M0 11.500h16M3.500 11.500v3M12.500 11.500v3" stroke="#222" fill="none" stroke-width="1.200"/><path d="M5 10.500l8-8.500l2.500 1.500l-7.500 8z" fill="#c8a070" stroke="#705030" stroke-width=".8"/><path d="M5 10.500l-1 1.500l2.500-.500z" fill="#333"/></svg>
<div class="t " style="left:503px;top:59px;">编辑钢筋</div>
<svg class="ic" style="left:558px;top:57px;" viewBox="0 0 16 16"><rect x="6.500" y="1.500" width="8" height="13" fill="#f4f8ff" stroke="#8ca8d8"/><path d="M8.500 4.500h4M8.500 7.500h4M8.500 10.500h4" stroke="#9ab0d8"/><path d="M0 3.500h3M0 6.500h3M0 9.500h3M0 12.500h3" stroke="#777" stroke-dasharray="1 1"/><path d="M3.500 3.500h1M3.500 6.500h1M3.500 9.500h1M3.500 12.500h1" stroke="#555"/></svg>
<div class="t " style="left:577px;top:59px;">构件列表</div>
<svg class="ic" style="left:634px;top:57px;" viewBox="0 0 16 16"><path d="M0.500 15.500l1-3.500l6.500-6.500l2.500 2.500l-6.500 6.500z" fill="#dce8fc" stroke="#5878c8"/><path d="M7 4l2-2l1 1l2.500-2.500c1.500-1 3.500 1 2.500 2.500l-2.500 2.500l1 1l-2 2z" fill="#4868b8"/></svg>
<div class="t " style="left:652px;top:59px;">拾取构件</div>
<div class="tb" style="left:778px;top:52px;width:280px;height:25px;"></div>
<div class="grip" style="left:780px;top:56px;height:17px"></div>
<svg class="ic" style="left:789.5px;top:57px;" viewBox="0 0 16 16"><path d="M4.500 1v14M11.500 1v14M0 4.500h16M0 11.500h16" stroke="#8f98b0"/><path d="M1 15l14-14" stroke="#666"/><circle cx="3" cy="13" r="1.200" fill="#888"/><circle cx="11.500" cy="4.500" r="1.200" fill="#888"/></svg>
<div class="t " style="left:809px;top:59px;">两点</div>
<svg class="ic" style="left:841px;top:57px;" viewBox="0 0 16 16"><path d="M4.500 1v14M10.500 1v14" stroke="#8f98c0"/><path d="M0 5.500h15M0 10.500h15" stroke="#d07080"/></svg>
<div class="t " style="left:860px;top:59px;">平行</div>
<svg class="ic" style="left:892px;top:57px;" viewBox="0 0 16 16"><path d="M4.500 1v14M11.500 1v14M0 4.500h15" stroke="#8f98b0"/><path d="M0 11.500h13" stroke="#d05060"/><path d="M1 15l13-14" stroke="#666"/><circle cx="3" cy="13" r="1.200" fill="#888"/><ellipse cx="14.500" cy="12" rx="1.200" ry="2" fill="none" stroke="#e04050"/></svg>
<div class="t " style="left:911px;top:59px;">点角</div>
<div class="arr " style="left:941.5px;top:63px"></div>
<svg class="ic" style="left:955px;top:57px;" viewBox="0 0 16 16"><path d="M8.500 1v14M2 9.500h13" stroke="#8088a8"/><path d="M2 12c0-6 4-10 10-10" fill="none" stroke="#e07080" stroke-width="1.200"/><circle cx="2.500" cy="13" r="1.300" fill="none" stroke="#e04050"/><path d="M11 1l2 2M13 1l-2 2" stroke="#e04050"/></svg>
<div class="t " style="left:975px;top:59px;">三点辅轴</div>
<div class="arr " style="left:1029.5px;top:63px"></div>
<svg class="ic" style="left:1043px;top:57px;" viewBox="0 0 16 16"><path d="M5 10l8-9.500l2.500 1.500l-7.500 9.500z" fill="#c8b888" stroke="#686048" stroke-width=".8"/><path d="M2 13c0-2.500 1.500-4 3.500-3.500l2 1.500c.5 2-2 4-5.500 2z" fill="#7888b0" stroke="#485070" stroke-width=".8"/><path d="M0 14.500h14" stroke="#8a8f98" stroke-width="1.400"/></svg>
<div class="tb" style="left:138px;top:78px;width:270px;height:25px;border-radius:0 3px 3px 0"></div>
<div class="grip" style="left:141px;top:82px;height:17px"></div>
<div class="btn" style="left:146px;top:80px;width:51px;height:22px;border-right:none;border-radius:3px 0 0 3px"></div>
<svg class="ic" style="left:150px;top:84px;" viewBox="0 0 16 16"><path d="M3.500 2.500v10l2.500-2.500l2 4.500l1.500-.7l-2-4.300h3.500z" fill="#fff" stroke="#7068a8" stroke-width="1"/></svg>
<div class="t " style="left:170px;top:86px;">选择</div>
<div class="arr " style="left:199.5px;top:89px"></div>
<div class="sep" style="left:212px;top:81px;height:18px"></div>
<svg class="ic" style="left:219px;top:83px;" viewBox="0 0 16 16"><rect x="2.500" y="3.500" width="10" height="10" fill="#e8e4f8" stroke="#6060b0"/><path d="M2.500 3.500l10 10M12.500 3.500l-10 10" stroke="#8080c0"/></svg>
<div class="t " style="left:238.5px;top:86px;">点</div>
<svg class="ic" style="left:258px;top:83px;" viewBox="0 0 16 16"><path d="M2.500 5.500c-2.500 5 1 9.500 5.500 9.500c4.500 0 7.500-4.500 6-8.500" fill="none" stroke="#8898b8" stroke-width="1.600"/><path d="M0.500 5l5-4l-.5 5.500z" fill="#5878c0"/><path d="M8.500 6v6M5.500 9h6" stroke="#555"/></svg>
<div class="t " style="left:277.5px;top:86px;">旋转点</div>
<div class="sep" style="left:320px;top:81px;height:19px"></div>
<svg class="ic" style="left:328px;top:83px;" viewBox="0 0 16 16"><rect x="0.500" y="1.500" width="14" height="13" fill="#dce8f8" stroke="#8890a0" stroke-dasharray="1 1"/><path d="M7.500 3v3M7.500 10v3M2 8h3M10 8h3" stroke="#223"/><path d="M7.500 2l-1.500 2h3zM7.500 14l-1.500-2h3zM1 8l2-1.500v3zM14 8l-2-1.500v3z" fill="#223"/></svg>
<div class="t " style="left:347px;top:86px;">智能布置</div>
<div class="arr " style="left:397.5px;top:89px"></div>
<svg class="a" style="left:138px;top:104px" width="920" height="466" viewBox="138 104 920 466" shape-rendering="auto">
<rect x="138" y="104" width="920" height="466" fill="#000"/>
<line x1="322.7" y1="104" x2="499.8" y2="311.3" stroke="#1a9a34" stroke-width="1" shape-rendering="crispEdges"/>
<line x1="338.6" y1="104" x2="569" y2="370.2" stroke="#cc142a" stroke-width="1" shape-rendering="crispEdges"/>
<line x1="372.6" y1="104" x2="540.7" y2="297.6" stroke="#1a9a34" stroke-width="1" shape-rendering="crispEdges"/>
<line x1="422.5" y1="104" x2="547.3" y2="248.4" stroke="#e0182c" stroke-width="1" shape-rendering="crispEdges"/>
<line x1="560" y1="105" x2="653.6" y2="215.5" stroke="#e0182c" stroke-width="1" shape-rendering="crispEdges"/>
<line x1="689.5" y1="104" x2="738.2" y2="159.7" stroke="#e0182c" stroke-width="1" shape-rendering="crispEdges"/>
<line x1="502" y1="112.5" x2="527" y2="104" stroke="#e0182c" stroke-width="1" shape-rendering="crispEdges"/>
<line x1="338.6" y1="180.5" x2="429.3" y2="143.1" stroke="#1a9a34" stroke-width="1" shape-rendering="crispEdges"/>
<line x1="406" y1="147" x2="419" y2="152" stroke="#1a9a34" stroke-width="1" shape-rendering="crispEdges"/>
<line x1="410" y1="153" x2="415" y2="146" stroke="#1a9a34" stroke-width="1" shape-rendering="crispEdges"/>
<line x1="463.5" y1="327.1" x2="556.5" y2="290.8" stroke="#1a9a34" stroke-width="1" shape-rendering="crispEdges"/>
<line x1="465.8" y1="327.1" x2="504.4" y2="373.6" stroke="#1a9a34" stroke-width="1" shape-rendering="crispEdges"/>
<line x1="497" y1="372" x2="513" y2="375" stroke="#1a9a34" stroke-width="1" shape-rendering="crispEdges"/>
<line x1="495" y1="310" x2="510" y2="312" stroke="#1a9a34" stroke-width="1" shape-rendering="crispEdges"/>
<line x1="531" y1="296" x2="548" y2="298" stroke="#1a9a34" stroke-width="1" shape-rendering="crispEdges"/>
<line x1="528.2" y1="362.3" x2="1058" y2="143.7" stroke="#cc142a" stroke-width="1" shape-rendering="crispEdges"/>
<line x1="617.2" y1="264.4" x2="929" y2="135.2" stroke="#e0182c" stroke-width="1" shape-rendering="crispEdges"/>
<line x1="597" y1="309.4" x2="1058" y2="118.3" stroke="#1a9a34" stroke-width="1" shape-rendering="crispEdges"/>
<line x1="622.5" y1="336.3" x2="1058" y2="150.7" stroke="#1a9a34" stroke-width="1" shape-rendering="crispEdges"/>
<line x1="588.3" y1="296.5" x2="660" y2="379" stroke="#1a9a34" stroke-width="1" shape-rendering="crispEdges"/>
<line x1="583.9" y1="387.8" x2="649.3" y2="360.4" stroke="#1a9a34" stroke-width="1" shape-rendering="crispEdges"/>
<line x1="585" y1="383" x2="583" y2="394" stroke="#1a9a34" stroke-width="1" shape-rendering="crispEdges"/>
<line x1="648" y1="356" x2="651" y2="366" stroke="#1a9a34" stroke-width="1" shape-rendering="crispEdges"/>
<line x1="697.7" y1="266.9" x2="745.9" y2="322.1" stroke="#1a9a34" stroke-width="1" shape-rendering="crispEdges"/>
<line x1="795.5" y1="230" x2="842.3" y2="282.5" stroke="#1a9a34" stroke-width="1" shape-rendering="crispEdges"/>
<line x1="993.2" y1="145.1" x2="1041" y2="198" stroke="#1a9a34" stroke-width="1" shape-rendering="crispEdges"/>
<line x1="694.7" y1="271.9" x2="700.7" y2="261.9" stroke="#1a9a34" stroke-width="1" shape-rendering="crispEdges"/>
<line x1="692.7" y1="267.9" x2="702.7" y2="265.9" stroke="#1a9a34" stroke-width="1" shape-rendering="crispEdges"/>
<line x1="792.5" y1="235" x2="798.5" y2="225" stroke="#1a9a34" stroke-width="1" shape-rendering="crispEdges"/>
<line x1="790.5" y1="231" x2="800.5" y2="229" stroke="#1a9a34" stroke-width="1" shape-rendering="crispEdges"/>
<line x1="990.2" y1="150.1" x2="996.2" y2="140.1" stroke="#1a9a34" stroke-width="1" shape-rendering="crispEdges"/>
<line x1="988.2" y1="146.1" x2="998.2" y2="144.1" stroke="#1a9a34" stroke-width="1" shape-rendering="crispEdges"/>
<line x1="596.6" y1="314" x2="602.6" y2="304" stroke="#1a9a34" stroke-width="1" shape-rendering="crispEdges"/>
<line x1="594.6" y1="310" x2="604.6" y2="308" stroke="#1a9a34" stroke-width="1" shape-rendering="crispEdges"/>
<line x1="621" y1="343" x2="627" y2="333" stroke="#1a9a34" stroke-width="1" shape-rendering="crispEdges"/>
<line x1="619" y1="339" x2="629" y2="337" stroke="#1a9a34" stroke-width="1" shape-rendering="crispEdges"/>
<polygon points="338.4,188.0 335.7,193.8 330.4,197.5 323.9,198.1 318.1,195.4 314.4,190.1 313.8,183.6 316.5,177.8 321.8,174.1 328.3,173.5 334.1,176.2 337.8,181.5" fill="none" stroke="#1a9a34" stroke-width="1" shape-rendering="crispEdges"/><text x="326.1" y="192.6" fill="#fff" stroke="#000" stroke-width=".5" font-size="19" text-anchor="middle" font-family="Liberation Sans,sans-serif">B</text>
<polygon points="507.9,117.2 505.2,123.0 499.9,126.7 493.4,127.3 487.6,124.6 483.9,119.3 483.3,112.8 486.0,107.0 491.3,103.3 497.8,102.7 503.6,105.4 507.3,110.7" fill="none" stroke="#1a9a34" stroke-width="1" shape-rendering="crispEdges"/><text x="495.6" y="121.8" fill="#fff" stroke="#000" stroke-width=".5" font-size="19" text-anchor="middle" font-family="Liberation Sans,sans-serif">B</text>
<polygon points="582.3,118.7 579.6,124.5 574.3,128.2 567.8,128.8 562.0,126.1 558.3,120.8 557.7,114.3 560.4,108.5 565.7,104.8 572.2,104.2 578.0,106.9 581.7,112.2" fill="none" stroke="#1a9a34" stroke-width="1" shape-rendering="crispEdges"/><text x="570" y="123.3" fill="#fff" stroke="#000" stroke-width=".5" font-size="19" text-anchor="middle" font-family="Liberation Sans,sans-serif">2</text>
<polygon points="716.4,119.0 713.7,124.8 708.4,128.5 701.9,129.1 696.1,126.4 692.4,121.1 691.8,114.6 694.5,108.8 699.8,105.1 706.3,104.5 712.1,107.2 715.8,112.5" fill="none" stroke="#1a9a34" stroke-width="1" shape-rendering="crispEdges"/><text x="704.1" y="123.6" fill="#fff" stroke="#000" stroke-width=".5" font-size="19" text-anchor="middle" font-family="Liberation Sans,sans-serif">3</text>
<polygon points="466.1,334.3 463.4,340.1 458.1,343.8 451.6,344.4 445.8,341.7 442.1,336.4 441.5,329.9 444.2,324.1 449.5,320.4 456.0,319.8 461.8,322.5 465.5,327.8" fill="none" stroke="#1a9a34" stroke-width="1" shape-rendering="crispEdges"/><text x="453.8" y="338.9" fill="#fff" stroke="#000" stroke-width=".5" font-size="19" text-anchor="middle" font-family="Liberation Sans,sans-serif">A</text>
<polygon points="668.3,376.2 665.6,382.0 660.3,385.7 653.8,386.3 648.0,383.6 644.3,378.3 643.7,371.8 646.4,366.0 651.7,362.3 658.2,361.7 664.0,364.4 667.7,369.7" fill="none" stroke="#1a9a34" stroke-width="1" shape-rendering="crispEdges"/><text x="656" y="380.8" fill="#fff" stroke="#000" stroke-width=".5" font-size="19" text-anchor="middle" font-family="Liberation Sans,sans-serif">1</text>
<polygon points="766.7,334.8 764.0,340.6 758.7,344.3 752.2,344.9 746.4,342.2 742.7,336.9 742.1,330.4 744.8,324.6 750.1,320.9 756.6,320.3 762.4,323.0 766.1,328.3" fill="none" stroke="#1a9a34" stroke-width="1" shape-rendering="crispEdges"/><text x="754.4" y="339.4" fill="#fff" stroke="#000" stroke-width=".5" font-size="19" text-anchor="middle" font-family="Liberation Sans,sans-serif">2</text>
<polygon points="865.1,294.0 862.4,299.8 857.1,303.5 850.6,304.1 844.8,301.4 841.1,296.1 840.5,289.6 843.2,283.8 848.5,280.1 855.0,279.5 860.8,282.2 864.5,287.5" fill="none" stroke="#1a9a34" stroke-width="1" shape-rendering="crispEdges"/><text x="852.8" y="298.6" fill="#fff" stroke="#000" stroke-width=".5" font-size="19" text-anchor="middle" font-family="Liberation Sans,sans-serif">3</text>
<polygon points="1063.8,212.6 1061.1,218.4 1055.8,222.1 1049.3,222.7 1043.5,220.0 1039.8,214.7 1039.2,208.2 1041.9,202.4 1047.2,198.7 1053.7,198.1 1059.5,200.8 1063.2,206.1" fill="none" stroke="#1a9a34" stroke-width="1" shape-rendering="crispEdges"/><text x="1051.5" y="217.2" fill="#fff" stroke="#000" stroke-width=".5" font-size="19" text-anchor="middle" font-family="Liberation Sans,sans-serif">4</text>
<circle cx="428" cy="106" r="12" fill="none" stroke="#1a9a34"/>
<text x="469.7" y="223.2" fill="#fff" stroke="#000" stroke-width=".5" font-size="19" text-anchor="middle" font-family="Liberation Sans,sans-serif" transform="rotate(-90 469.7 223.2)">8000</text>
<text x="490.7" y="343.7" fill="#fff" stroke="#000" stroke-width=".5" font-size="19" text-anchor="middle" font-family="Liberation Sans,sans-serif" transform="rotate(-90 490.7 343.7)">2500</text>
<text x="745.3" y="245" fill="#fff" stroke="#000" stroke-width=".5" font-size="19" text-anchor="middle" font-family="Liberation Sans,sans-serif">4000</text>
<text x="292" y="106.5" fill="#fff" stroke="#000" stroke-width=".5" font-size="19" text-anchor="middle" font-family="Liberation Sans,sans-serif">00</text>
<text x="892.4" y="184" fill="#fff" stroke="#000" stroke-width=".5" font-size="19" text-anchor="middle" font-family="Liberation Sans,sans-serif">8000</text>
<text x="646" y="285.6" fill="#fff" stroke="#000" stroke-width=".5" font-size="19" text-anchor="middle" font-family="Liberation Sans,sans-serif">4000</text>
<text x="635" y="383.2" fill="#fff" stroke="#000" stroke-width=".5" font-size="19" text-anchor="middle" font-family="Liberation Sans,sans-serif">00</text>
<polygon points="528,104 582.4,104 546.9,119.7 538.6,120.4 528,116.6" fill="#878716" stroke="#8c8c20" stroke-width=".7" stroke-linejoin="round" />
<polygon points="528,104 539,104 538.6,120.4 528,116.6" fill="#777708" stroke="#8c8c20" stroke-width=".7" stroke-linejoin="round" />
<polygon points="415.9,118.1 444.6,104 479.4,104 504.6,135.1 450.7,156.7" fill="#7f7f0b" stroke="#8c8c20" stroke-width=".7" stroke-linejoin="round" />
<polygon points="415.9,118.1 450.7,156.7 450.7,166.1 415.9,126.5" fill="#777708" stroke="#8c8c20" stroke-width=".7" stroke-linejoin="round" />
<polygon points="450.7,156.7 504.6,135.1 504.6,143.9 450.7,166.1" fill="#878716" stroke="#8c8c20" stroke-width=".7" stroke-linejoin="round" />
<polygon points="532.5,122.7 541.6,118.9 591.8,139.6 591.8,148.4 546.9,166.5 532.5,160.5" fill="#7f7f0b" stroke="#8c8c20" stroke-width=".7" stroke-linejoin="round" />
<polygon points="546.9,166.5 591.8,148.4 590.7,174.1 545.4,191.5" fill="#878716" stroke="#8c8c20" stroke-width=".7" stroke-linejoin="round" />
<polygon points="532.5,160.5 546.9,166.5 545.4,191.5 532.5,187" fill="#777708" stroke="#8c8c20" stroke-width=".7" stroke-linejoin="round" />
<polygon points="530.8,127 532.5,122.7 532.5,187 531.3,186.5" fill="#60600a" stroke="#60600a" stroke-width=".7" stroke-linejoin="round" />
<polygon points="711.3,174.4 779.9,143.6 823.4,194.3 754.4,223.6" fill="#7f7f0b" stroke="#8c8c20" stroke-width=".7" stroke-linejoin="round" />
<polygon points="711.3,174.4 754.4,223.6 754.4,232.1 711.3,182" fill="#777708" stroke="#8c8c20" stroke-width=".7" stroke-linejoin="round" />
<polygon points="754.4,223.6 823.4,194.3 823.4,203.7 754.4,232.1" fill="#878716" stroke="#8c8c20" stroke-width=".7" stroke-linejoin="round" />
<polygon points="655.5,201.2 665.4,195.9 714.8,215.5 714,224.6 669.9,242.8 656.3,238.2" fill="#7f7f0b" stroke="#8c8c20" stroke-width=".7" stroke-linejoin="round" />
<polygon points="669.9,242.8 714,224.6 713.8,246.5 666.9,268.5" fill="#878716" stroke="#8c8c20" stroke-width=".7" stroke-linejoin="round" />
<polygon points="656.3,238.2 669.9,242.8 666.9,268.5 655.5,263.2" fill="#777708" stroke="#8c8c20" stroke-width=".7" stroke-linejoin="round" />
<polygon points="653.8,210 655.5,201.2 655.5,263.2 654.3,262" fill="#60600a" stroke="#60600a" stroke-width=".7" stroke-linejoin="round" />
<polygon points="916.6,104 1012,104 1013,116 967.6,140.6 918.1,121.7" fill="#7f7f0b" stroke="#8c8c20" stroke-width=".7" stroke-linejoin="round" />
<polygon points="918.1,121.7 967.6,140.6 966.7,149.5 918.5,130.2" fill="#777708" stroke="#8c8c20" stroke-width=".7" stroke-linejoin="round" />
<polygon points="967.6,140.6 1013,116 1012,128.4 966.7,149.5" fill="#878716" stroke="#8c8c20" stroke-width=".7" stroke-linejoin="round" />
<polygon points="916.6,104 918.1,121.7 918.5,130.2 916.2,129" fill="#60600a" stroke="#60600a" stroke-width=".7" stroke-linejoin="round" />
<defs><linearGradient id="pg" x1="0" x2="1" y1="0" y2="0"><stop offset="0" stop-color="#0e5ccc"/><stop offset=".45" stop-color="#136ce2"/><stop offset="1" stop-color="#1878ee"/></linearGradient></defs>
<path d="M610.5 282 Q610.5 274 622 274 Q633.5 274 633.5 282 L615.8 480 L611.7 530 L599.2 539.7 L588.5 530 L591.8 480 Z" fill="url(#pg)" opacity=".9"/>
<ellipse cx="622" cy="282" rx="11.3" ry="7.5" fill="#1e80f6" opacity=".9"/>
<polygon points="534,257.8 587.9,232.3 623.8,273.9 569,295.6" fill="#7f7f0b" stroke="#8c8c20" stroke-width=".7" stroke-linejoin="round" />
<polygon points="534,257.8 569,295.6 569,304.1 534,264.4" fill="#777708" stroke="#8c8c20" stroke-width=".7" stroke-linejoin="round" />
<polygon points="569,295.6 623.8,273.9 622.9,282.4 569,304.1" fill="#878716" stroke="#8c8c20" stroke-width=".7" stroke-linejoin="round" />
<g stroke-linecap="butt">
<line x1="193" y1="520.6" x2="170.5" y2="494" stroke="#10e030" stroke-width="3.6"/>
<polygon points="166.5,489.4 176,493.5 170,498.5" fill="#10e030" stroke="#10e030" stroke-width=".7" stroke-linejoin="round" />
<line x1="193" y1="520.6" x2="195.4" y2="495" stroke="#1478f0" stroke-width="3.2"/>
<polygon points="195.8,486.1 199.8,496 191.5,495.5" fill="#1478f0" stroke="#1478f0" stroke-width=".7" stroke-linejoin="round" />
<line x1="193" y1="520.6" x2="225" y2="507" stroke="#f01414" stroke-width="3.6"/>
<polygon points="233.6,503.1 226,511 223.5,503.5" fill="#f01414" stroke="#f01414" stroke-width=".7" stroke-linejoin="round" />
</g>
<text x="177.500" y="494" fill="#7fcf50" font-size="12" font-family="Liberation Sans,sans-serif">Y</text>
<text x="184" y="493" fill="#4c8fe0" font-size="12" font-family="Liberation Sans,sans-serif">Z</text>
<text x="215" y="500.500" fill="#b03030" font-size="12" font-family="Liberation Sans,sans-serif">X</text>
</svg>
<div class="tb" style="left:138px;top:571px;width:866px;height:24px;border-radius:0 3px 3px 0"></div>
<div class="grip" style="left:141px;top:575px;height:16px"></div>
<svg class="ic" style="left:149px;top:575px;" viewBox="0 0 16 16"><path d="M1 2.500h14M4.500 1v14" stroke="#e0a8a8" stroke-width="2"/><path d="M7 6l5 8" stroke="#a8b0c8" stroke-width="1.500"/><path d="M7 5.500l4 1.500l-2.500 2z" fill="#c0c8e0"/></svg>
<div class="t " style="left:169px;top:577px;">正交</div>
<div class="btn" style="left:197px;top:572px;width:75px;height:22px;"></div>
<svg class="ic" style="left:200.5px;top:575px;" viewBox="0 0 16 16"><path d="M3.500 1v12M12.500 1v12M0 7.500h16" stroke="#703028" stroke-width="1.100"/><circle cx="3.500" cy="7.500" r="1.500" fill="#703028"/><circle cx="12.500" cy="7.500" r="1.500" fill="#703028"/><path d="M5 10.500c2-2.500 7-2.500 9 0v3c-2 2.500-7 2.500-9 0z" fill="#e8c868" stroke="#a88838" stroke-width=".8"/></svg>
<div class="t " style="left:220.5px;top:577px;">对象捕捉</div>
<div class="btn" style="left:273px;top:572px;width:74px;height:22px;"></div>
<svg class="ic" style="left:276.5px;top:575px;" viewBox="0 0 16 16"><path d="M0.500 2v12.500M15.500 2v12.500M0 3.500h16M0 6.500h16" stroke="#555" fill="none"/><rect x="3.500" y="9.500" width="9" height="6" fill="#fff" stroke="#222"/><path d="M6 11v3.500M8.500 11h2v1.500h-2v2h2.500" stroke="#222" fill="none" stroke-width=".9"/></svg>
<div class="t " style="left:296px;top:577px;">动态输入</div>
<div class="grip" style="left:351px;top:575px;height:16px"></div>
<svg class="ic" style="left:360px;top:575px;" viewBox="0 0 16 16"><path d="M2 2l12 12M14 2l-12 12" stroke="#7aa0c8" stroke-width="1.300"/><rect x="6" y="6" width="4" height="4" fill="#284878"/></svg>
<div class="t " style="left:380px;top:577px;">交点</div>
<div class="btn" style="left:408px;top:572px;width:50px;height:22px;"></div>
<svg class="ic" style="left:412px;top:575px;" viewBox="0 0 16 16"><path d="M0 13.500h16M12.500 1v14" stroke="#2858d0" stroke-width="1.300"/><circle cx="12.500" cy="13.500" r="1.800" fill="#183888"/></svg>
<div class="t " style="left:432px;top:577px;">垂点</div>
<div class="btn" style="left:460px;top:572px;width:50px;height:22px;"></div>
<svg class="ic" style="left:463px;top:575px;" viewBox="0 0 16 16"><path d="M1 8h14" stroke="#2858d0" stroke-width="1.300"/><rect x="6" y="6" width="4" height="4" fill="#183888"/></svg>
<div class="t " style="left:484px;top:577px;">中点</div>
<div class="btn" style="left:511px;top:572px;width:50px;height:22px;"></div>
<svg class="ic" style="left:514px;top:575px;" viewBox="0 0 16 16"><path d="M8 2l6.500 5l-2.500 7.500h-8l-2.500-7.500z" fill="#fff" stroke="#2858d0" stroke-width="1.400"/><circle cx="8" cy="2" r="1.300" fill="#183888"/><circle cx="4" cy="14.500" r="1.300" fill="#183888"/><circle cx="12" cy="14.500" r="1.300" fill="#183888"/></svg>
<div class="t " style="left:534px;top:577px;">顶点</div>
<svg class="ic" style="left:564px;top:575px;" viewBox="0 0 16 16"><path d="M3.500 2v12.500M3.500 13.500h12" stroke="#8898b8" stroke-dasharray="1 1"/><path d="M6 13c2-1 3-3 3.500-5.500M13 3l-3.500 4.500" stroke="#7890c0" fill="none"/><path d="M0 2l1.500 1.500M1.500 2l-1.500 3M12 1l2 2.500M14 1l-2 2.500" stroke="#6078a8" stroke-width=".8"/><circle cx="9.500" cy="7.500" r="1.300" fill="#8aa8d8"/></svg>
<div class="t " style="left:584px;top:577px;">坐标</div>
<div class="sep" style="left:612px;top:573px;height:20px"></div>
<div class="grip" style="left:616px;top:575px;height:16px"></div>
<div class="combo" style="left:623.5px;top:574px;width:57px;height:17px;"></div>
<div class="t " style="left:626.5px;top:575px;">不偏移</div>
<div class="cbtn" style="left:668.5px;top:576px;width:11px;height:13px;width:11px"></div>
<svg class="a" style="left:669.5px;top:579px" width="9" height="8" viewBox="0 0 9 8"><path d="M1 2 L4.5 5.5 L8 2" fill="none" stroke="#4d6185" stroke-width="2"/></svg>
<div class="sep" style="left:684px;top:574px;height:18px"></div>
<div class="t d mono" style="left:687px;top:577px;">X=</div>
<div class="a" style="left:703px;top:574px;width:55px;height:17px;border:1px solid #fbfaf5;background:#eeebdc;box-sizing:border-box"></div>
<div class="t d mono" style="left:734px;top:575px;">0</div>
<svg class="a" style="left:746px;top:575px" width="11" height="15" viewBox="0 0 11 15"><rect width="11" height="15" rx="2" fill="#e6e3d4"/><path d="M2.5 6L5.5 3L8.5 6M2.5 9L5.5 12L8.5 9" fill="none" stroke="#c4c1b0" stroke-width="1.6"/></svg>
<div class="t d mono" style="left:761px;top:577px;">mm</div>
<div class="t d mono" style="left:780px;top:577px;">Y=</div>
<div class="a" style="left:795px;top:574px;width:55px;height:17px;border:1px solid #fbfaf5;background:#eeebdc;box-sizing:border-box"></div>
<div class="t d mono" style="left:826px;top:575px;">0</div>
<svg class="a" style="left:838px;top:575px" width="11" height="15" viewBox="0 0 11 15"><rect width="11" height="15" rx="2" fill="#e6e3d4"/><path d="M2.5 6L5.5 3L8.5 6M2.5 9L5.5 12L8.5 9" fill="none" stroke="#c4c1b0" stroke-width="1.6"/></svg>
<div class="t d mono" style="left:852px;top:577px;">mm</div>
<div class="sep" style="left:868px;top:573px;height:20px"></div>
<div class="a" style="left:872px;top:576px;width:13px;height:13px;border:1px solid #1c5180;background:linear-gradient(135deg,#dfe6f3,#fff);box-sizing:border-box"></div>
<div class="t " style="left:893px;top:577px;">旋转</div>
<div class="a" style="left:922px;top:574px;width:66px;height:17px;border:1px solid #fbfaf5;background:#eeebdc;box-sizing:border-box"></div>
<div class="t d mono" style="left:939px;top:575px;">0.000</div>
<svg class="a" style="left:976px;top:575px" width="11" height="15" viewBox="0 0 11 15"><rect width="11" height="15" rx="2" fill="#e6e3d4"/><path d="M2.5 6L5.5 3L8.5 6M2.5 9L5.5 12L8.5 9" fill="none" stroke="#c4c1b0" stroke-width="1.6"/></svg>
<div class="t d" style="left:991px;top:573px;font-size:10px">°</div>
<div class="a" style="left:133px;top:596px;width:925px;height:1px;background:#f8f7f1"></div>
<div class="a" style="left:150px;top:598px;width:908px;height:27px;background:linear-gradient(#f7f7f3,#f1f0e9 60%,#eceade)"></div>
<svg class="a" style="left:140px;top:601px" width="8" height="8" viewBox="0 0 8 8"><rect width="8" height="8" rx="1.5" fill="#c8402a"/><path d="M2 2l4 4M6 2l-4 4" stroke="#fff" stroke-width="1.4"/></svg>
<div class="a" style="left:143px;top:613px;width:2px;height:143px;background-image:repeating-linear-gradient(#8f8f8f 0,#8f8f8f 1px,transparent 1px,transparent 3px)"></div>
<svg class="ic" style="left:154px;top:604px;opacity:.45;filter:grayscale(1);" viewBox="0 0 16 16"><path d="M3.500 3v10" stroke="#777" stroke-width="2"/><path d="M12 2.500v11l-7-5.500z" fill="#777"/></svg>
<svg class="ic" style="left:178px;top:604px;opacity:.45;filter:grayscale(1);" viewBox="0 0 16 16"><path d="M11.500 2.500v11l-7.500-5.500z" fill="#777"/></svg>
<svg class="ic" style="left:202px;top:604px;" viewBox="0 0 16 16"><path d="M4.500 2.500v11l7.500-5.500z" fill="#5888e0"/><path d="M4.500 2.500v11l3-5.500z" fill="#88b0f0"/></svg>
<svg class="ic" style="left:226px;top:604px;" viewBox="0 0 16 16"><path d="M12.500 3v10" stroke="#4878d0" stroke-width="2"/><path d="M4 2.500v11l7-5.500z" fill="#5888e0"/></svg>
<div class="sep" style="left:246px;top:601px;height:21px"></div>
<svg class="ic" style="left:253px;top:604px;opacity:.45;filter:grayscale(1);" viewBox="0 0 16 16"><path d="M8 3l5 5.500h-3v4.500h-4v-4.500h-3z" fill="#888"/></svg>
<svg class="ic" style="left:276px;top:604px;" viewBox="0 0 16 16"><path d="M8 13l5-5.500h-3v-4.500h-4v4.500h-3z" fill="#5888e0" stroke="#3868c0" stroke-width=".6"/></svg>
<div class="sep" style="left:299px;top:601px;height:21px"></div>
<svg class="ic" style="left:305px;top:604px;opacity:.45;filter:grayscale(1);" viewBox="0 0 16 16"><path d="M0.500 1.500h4v3h-4zM0.500 11.500h4v3h-4z" fill="none" stroke="#777"/><path d="M2.500 5v6" stroke="#777" stroke-dasharray="1 1"/><path d="M6 8h3" stroke="#666"/><path d="M6 8l2.500-2v4z" fill="#666"/><rect x="10.500" y="6.500" width="6" height="3" fill="#ddd" stroke="#777"/></svg>
<div class="t d" style="left:325px;top:606px;">插入</div>
<svg class="ic" style="left:355px;top:604px;opacity:.45;filter:grayscale(1);" viewBox="0 0 16 16"><path d="M0.500 1.500h8v3h-8zM0.500 6.500h8v3h-8zM0.500 11.500h8v3h-8z" fill="none" stroke="#777"/><path d="M10 8h5" stroke="#666"/><path d="M16 8l-2.500-2v4z" fill="#666"/></svg>
<div class="t d" style="left:375px;top:606px;">删除</div>
<svg class="ic" style="left:408px;top:604px;" viewBox="0 0 16 16"><path d="M1.500 4v11M4.500 8v7M7.500 10v5M10.500 12v3" stroke="#555" stroke-dasharray="1 1"/><path d="M1.500 1v2M1 2.500h13" stroke="#555" /><path d="M14 .500v4" stroke="#c04030" stroke-width="1.400"/></svg>
<div class="t " style="left:427px;top:606px;">缩尺配筋</div>
<svg class="ic" style="left:482px;top:604px;" viewBox="0 0 16 16"><rect x="4.500" y="3.500" width="10" height="11" fill="#e8f0fc" stroke="#9ab0d8"/><path d="M9.500 3.500v11M4.500 9h10" stroke="#9ab0d8"/><path d="M1 9l8-7.500l2 1.500l-7.500 8z" fill="#c8a878" stroke="#806040" stroke-width=".8"/></svg>
<div class="t " style="left:501px;top:606px;">钢筋信息</div>
<svg class="ic" style="left:556px;top:604px;" viewBox="0 0 16 16"><rect x="1.500" y="2.500" width="11" height="11" fill="#f4f8ff" stroke="#8098c8"/><path d="M3.500 5.500h7M3.500 8h4M3.500 10.500h4" stroke="#8098c8"/><path d="M8 8.500h4v-2.500l4 4l-4 4v-2.500h-4z" fill="#5888e0" stroke="#3060b8" stroke-width=".6"/></svg>
<div class="t " style="left:577px;top:606px;">其他</div>
<div class="arr " style="left:603px;top:611px"></div>
<div class="t " style="left:618px;top:606px;">关闭</div>
<div class="sep" style="left:649px;top:601px;height:21px"></div>
<div class="t " style="left:659px;top:606px;">单构件钢筋总重<span class="mono">(kg)</span>：<span class="mono">260.882</span></div>
<div class="a" style="left:151px;top:625px;width:910px;height:140px;background:#fff;border-top:1px solid #8f9cb8;border-left:1px solid #9aa4bc"></div>
<div class="a" style="left:152px;top:626px;width:33px;height:20px;background:linear-gradient(#ffffff,#f9f7f2 55%,#ebe7dc);border-right:1px solid #c0c0c0;border-bottom:1px solid #c0c0c0;box-sizing:border-box"></div>
<div class="a" style="left:185px;top:626px;width:73px;height:20px;background:linear-gradient(#f8c26c,#fad08a 50%,#fbd99c);border-right:1px solid #c0c0c0;border-bottom:1px solid #c0c0c0;box-sizing:border-box"></div>
<div class="t" style="left:185px;top:630px;width:73px;text-align:center">筋号</div>
<div class="a" style="left:258px;top:626px;width:56px;height:20px;background:linear-gradient(#ffffff,#f9f7f2 55%,#ebe7dc);border-right:1px solid #c0c0c0;border-bottom:1px solid #c0c0c0;box-sizing:border-box"></div>
<div class="t" style="left:258px;top:630px;width:56px;text-align:center">直径<span class="mono">(mm)</span></div>
<div class="a" style="left:314px;top:626px;width:36px;height:20px;background:linear-gradient(#ffffff,#f9f7f2 55%,#ebe7dc);border-right:1px solid #c0c0c0;border-bottom:1px solid #c0c0c0;box-sizing:border-box"></div>
<div class="t" style="left:314px;top:630px;width:36px;text-align:center">级别</div>
<div class="a" style="left:350px;top:626px;width:33px;height:20px;background:linear-gradient(#ffffff,#f9f7f2 55%,#ebe7dc);border-right:1px solid #c0c0c0;border-bottom:1px solid #c0c0c0;box-sizing:border-box"></div>
<div class="t" style="left:350px;top:630px;width:33px;text-align:center">图号</div>
<div class="a" style="left:383px;top:626px;width:201px;height:20px;background:linear-gradient(#ffffff,#f9f7f2 55%,#ebe7dc);border-right:1px solid #c0c0c0;border-bottom:1px solid #c0c0c0;box-sizing:border-box"></div>
<div class="t" style="left:383px;top:630px;width:201px;text-align:center">图形</div>
<div class="a" style="left:584px;top:626px;width:166px;height:20px;background:linear-gradient(#ffffff,#f9f7f2 55%,#ebe7dc);border-right:1px solid #c0c0c0;border-bottom:1px solid #c0c0c0;box-sizing:border-box"></div>
<div class="t" style="left:584px;top:630px;width:166px;text-align:center">计算公式</div>
<div class="a" style="left:750px;top:626px;width:156px;height:20px;background:linear-gradient(#ffffff,#f9f7f2 55%,#ebe7dc);border-right:1px solid #c0c0c0;border-bottom:1px solid #c0c0c0;box-sizing:border-box"></div>
<div class="t" style="left:750px;top:630px;width:156px;text-align:center">公式描述</div>
<div class="a" style="left:906px;top:626px;width:61px;height:20px;background:linear-gradient(#ffffff,#f9f7f2 55%,#ebe7dc);border-right:1px solid #c0c0c0;border-bottom:1px solid #c0c0c0;box-sizing:border-box"></div>
<div class="t" style="left:906px;top:630px;width:61px;text-align:center">长度<span class="mono">(mm)</span></div>
<div class="a" style="left:967px;top:626px;width:38px;height:20px;background:linear-gradient(#ffffff,#f9f7f2 55%,#ebe7dc);border-right:1px solid #c0c0c0;border-bottom:1px solid #c0c0c0;box-sizing:border-box"></div>
<div class="t" style="left:967px;top:630px;width:38px;text-align:center">根数</div>
<div class="a" style="left:1005px;top:626px;width:40px;height:20px;background:linear-gradient(#ffffff,#f9f7f2 55%,#ebe7dc);border-right:1px solid #c0c0c0;border-bottom:1px solid #c0c0c0;box-sizing:border-box"></div>
<div class="t" style="left:1005px;top:630px;width:40px;text-align:center">搭接</div>
<div class="a" style="left:1045px;top:626px;width:26px;height:20px;background:linear-gradient(#ffffff,#f9f7f2 55%,#ebe7dc);border-right:1px solid #c0c0c0;border-bottom:1px solid #c0c0c0;box-sizing:border-box"></div>
<div class="t " style="left:1050px;top:630px;">损耗</div>
<div class="a" style="left:152px;top:646px;width:33px;height:29px;background:#fcc878;border-right:1px solid #c0c0c0;border-bottom:1px solid #c0c0c0;box-sizing:border-box"></div>
<div class="t mono" style="left:162px;top:654.5px;color:#fff">1*</div>
<div class="a" style="left:185px;top:646px;width:73px;height:29px;background:#a8e4d0;border-right:1px solid #c4c8c4;border-bottom:1px solid #c4c8c4;box-sizing:border-box"></div>
<div class="t mono" style="left:188px;top:654.5px;">1</div>
<div class="a" style="left:258px;top:646px;width:56px;height:29px;background:#ccffcc;border-right:1px solid #c4c8c4;border-bottom:1px solid #c4c8c4;box-sizing:border-box"></div>
<div class="t mono" style="left:261px;top:654.5px;">20</div>
<div class="a" style="left:314px;top:646px;width:36px;height:29px;background:#ccffcc;border-right:1px solid #c4c8c4;border-bottom:1px solid #c4c8c4;box-sizing:border-box"></div>
<div class="t" style="left:314px;top:654.5px;width:36px;text-align:center"><span style="font-size:11px">Φ</span></div>
<div class="a" style="left:350px;top:646px;width:33px;height:29px;background:#ccffcc;border-right:1px solid #c4c8c4;border-bottom:1px solid #c4c8c4;box-sizing:border-box"></div>
<div class="t mono" style="left:353px;top:654.5px;">1</div>
<div class="a" style="left:383px;top:646px;width:201px;height:29px;background:#ccffcc;border-right:1px solid #c4c8c4;border-bottom:1px solid #c4c8c4;box-sizing:border-box"></div>
<div class="a" style="left:584px;top:646px;width:166px;height:29px;background:#ccffcc;border-right:1px solid #c4c8c4;border-bottom:1px solid #c4c8c4;box-sizing:border-box"></div>
<div class="t mono" style="left:587px;top:654.5px;">10000</div>
<div class="a" style="left:750px;top:646px;width:156px;height:29px;background:#ccffcc;border-right:1px solid #c4c8c4;border-bottom:1px solid #c4c8c4;box-sizing:border-box"></div>
<div class="a" style="left:906px;top:646px;width:61px;height:29px;background:#ccffcc;border-right:1px solid #c4c8c4;border-bottom:1px solid #c4c8c4;box-sizing:border-box"></div>
<div class="t mono" style="left:909px;top:654.5px;">10000</div>
<div class="a" style="left:967px;top:646px;width:38px;height:29px;background:#ccffcc;border-right:1px solid #c4c8c4;border-bottom:1px solid #c4c8c4;box-sizing:border-box"></div>
<div class="t mono" style="left:970px;top:654.5px;">8</div>
<div class="a" style="left:1005px;top:646px;width:40px;height:29px;background:#ccffcc;border-right:1px solid #c4c8c4;border-bottom:1px solid #c4c8c4;box-sizing:border-box"></div>
<div class="t mono" style="left:1008px;top:654.5px;">0</div>
<div class="a" style="left:1045px;top:646px;width:26px;height:29px;background:#ccffcc;border-right:1px solid #c4c8c4;border-bottom:1px solid #c4c8c4;box-sizing:border-box"></div>
<div class="t mono" style="left:1048px;top:654.5px;">3</div>
<div class="a" style="left:152px;top:675px;width:33px;height:50px;background:linear-gradient(90deg,#ffffff,#ebebe6);border-right:1px solid #c0c0c0;border-bottom:1px solid #c0c0c0;box-sizing:border-box"></div>
<div class="t mono" style="left:161px;top:694px;">2</div>
<div class="a" style="left:185px;top:675px;width:73px;height:50px;background:#ccffcc;border-right:1px solid #c4c8c4;border-bottom:1px solid #c4c8c4;box-sizing:border-box"></div>
<div class="t mono" style="left:188px;top:694px;">2</div>
<div class="a" style="left:258px;top:675px;width:56px;height:50px;background:#ccffcc;border-right:1px solid #c4c8c4;border-bottom:1px solid #c4c8c4;box-sizing:border-box"></div>
<div class="t mono" style="left:261px;top:694px;">10</div>
<div class="a" style="left:314px;top:675px;width:36px;height:50px;background:#ccffcc;border-right:1px solid #c4c8c4;border-bottom:1px solid #c4c8c4;box-sizing:border-box"></div>
<div class="t" style="left:314px;top:694px;width:36px;text-align:center"><span style="font-size:11px">Φ</span></div>
<div class="a" style="left:350px;top:675px;width:33px;height:50px;background:#ccffcc;border-right:1px solid #c4c8c4;border-bottom:1px solid #c4c8c4;box-sizing:border-box"></div>
<div class="t mono" style="left:353px;top:694px;">8</div>
<div class="a" style="left:383px;top:675px;width:201px;height:50px;background:#ccffcc;border-right:1px solid #c4c8c4;border-bottom:1px solid #c4c8c4;box-sizing:border-box"></div>
<div class="a" style="left:584px;top:675px;width:166px;height:50px;background:#ccffcc;border-right:1px solid #c4c8c4;border-bottom:1px solid #c4c8c4;box-sizing:border-box"></div>
<div class="t mono" style="left:587px;top:686px;height:auto;line-height:14px">SQRT(SQR(PI*(600+2*d))+SQR<br>(200))*(10000+2*d)/200/2</div>
<div class="a" style="left:750px;top:675px;width:156px;height:50px;background:#ccffcc;border-right:1px solid #c4c8c4;border-bottom:1px solid #c4c8c4;box-sizing:border-box"></div>
<div class="a" style="left:906px;top:675px;width:61px;height:50px;background:#ccffcc;border-right:1px solid #c4c8c4;border-bottom:1px solid #c4c8c4;box-sizing:border-box"></div>
<div class="t mono" style="left:909px;top:694px;">49049</div>
<div class="a" style="left:967px;top:675px;width:38px;height:50px;background:#ccffcc;border-right:1px solid #c4c8c4;border-bottom:1px solid #c4c8c4;box-sizing:border-box"></div>
<div class="t mono" style="left:970px;top:694px;">2</div>
<div class="a" style="left:1005px;top:675px;width:40px;height:50px;background:#ccffcc;border-right:1px solid #c4c8c4;border-bottom:1px solid #c4c8c4;box-sizing:border-box"></div>
<div class="t mono" style="left:1008px;top:694px;">2520</div>
<div class="a" style="left:1045px;top:675px;width:26px;height:50px;background:#ccffcc;border-right:1px solid #c4c8c4;border-bottom:1px solid #c4c8c4;box-sizing:border-box"></div>
<div class="t mono" style="left:1048px;top:694px;">3</div>
<div class="a" style="left:152px;top:725px;width:33px;height:19px;background:linear-gradient(90deg,#ffffff,#ebebe6);border-right:1px solid #c0c0c0;border-bottom:1px solid #c0c0c0;box-sizing:border-box"></div>
<div class="t mono" style="left:161px;top:728.5px;">3</div>
<div class="a" style="left:185px;top:725px;width:73px;height:19px;background:#fff;border-right:1px solid #c4c8c4;border-bottom:1px solid #c4c8c4;box-sizing:border-box"></div>
<div class="a" style="left:258px;top:725px;width:56px;height:19px;background:#fff;border-right:1px solid #c4c8c4;border-bottom:1px solid #c4c8c4;box-sizing:border-box"></div>
<div class="a" style="left:314px;top:725px;width:36px;height:19px;background:#fff;border-right:1px solid #c4c8c4;border-bottom:1px solid #c4c8c4;box-sizing:border-box"></div>
<div class="a" style="left:350px;top:725px;width:33px;height:19px;background:#fff;border-right:1px solid #c4c8c4;border-bottom:1px solid #c4c8c4;box-sizing:border-box"></div>
<div class="a" style="left:383px;top:725px;width:201px;height:19px;background:#fff;border-right:1px solid #c4c8c4;border-bottom:1px solid #c4c8c4;box-sizing:border-box"></div>
<div class="a" style="left:584px;top:725px;width:166px;height:19px;background:#fff;border-right:1px solid #c4c8c4;border-bottom:1px solid #c4c8c4;box-sizing:border-box"></div>
<div class="a" style="left:750px;top:725px;width:156px;height:19px;background:#fff;border-right:1px solid #c4c8c4;border-bottom:1px solid #c4c8c4;box-sizing:border-box"></div>
<div class="a" style="left:906px;top:725px;width:61px;height:19px;background:#fff;border-right:1px solid #c4c8c4;border-bottom:1px solid #c4c8c4;box-sizing:border-box"></div>
<div class="a" style="left:967px;top:725px;width:38px;height:19px;background:#fff;border-right:1px solid #c4c8c4;border-bottom:1px solid #c4c8c4;box-sizing:border-box"></div>
<div class="a" style="left:1005px;top:725px;width:40px;height:19px;background:#fff;border-right:1px solid #c4c8c4;border-bottom:1px solid #c4c8c4;box-sizing:border-box"></div>
<div class="a" style="left:1045px;top:725px;width:26px;height:19px;background:#fff;border-right:1px solid #c4c8c4;border-bottom:1px solid #c4c8c4;box-sizing:border-box"></div>
<div class="a" style="left:257px;top:646px;width:1px;height:98px;background:#000"></div>
<svg class="a" style="left:383px;top:646px" width="201" height="79" viewBox="0 0 201 79">
<text x="105" y="16" font-size="11" fill="#d01010" text-anchor="middle" font-family="Liberation Sans,sans-serif">10000</text>
<path d="M24 19.500H174" stroke="#000" stroke-width="1.6"/>
<text x="91" y="39" font-size="11" fill="#000" text-anchor="middle" font-family="Liberation Sans,sans-serif">10000</text>
<path d="M38 40v5M146 40v5M38 42.500H146" stroke="#000" stroke-width="1"/>
<path d="M38 46V62M38 47L56 62L74 47L92 62L110 47L128 62L146 47V62" stroke="#000" stroke-width="1.8" fill="none"/>
<path d="M151 46h5M151 61h5M153.500 46V61" stroke="#000" stroke-width="1"/><path d="M153.500 46l-2 4h4zM153.500 61l-2 -4h4z" fill="#000"/>
<text x="159" y="58" font-size="11" fill="#000" font-family="Liberation Sans,sans-serif">600</text>
<text x="58" y="66" font-size="11" fill="#000" font-family="Liberation Sans,sans-serif">200</text>
<path d="M52 68v6M80 68v6M52 71H80" stroke="#000" stroke-width="1"/><path d="M52 71l4 -2v4zM80 71l-4 -2v4z" fill="#000"/>
<text x="101" y="76" font-size="12" fill="#000" font-family="Liberation Sans,Noto Sans CJK SC,sans-serif">钢筋分</text>
<text x="140" y="75" font-size="11" fill="#000" font-family="Liberation Sans,sans-serif">2</text>
<text x="153" y="76" font-size="12" fill="#000" font-family="Liberation Sans,Noto Sans CJK SC,sans-serif">段</text>
</svg>
</body></html>
